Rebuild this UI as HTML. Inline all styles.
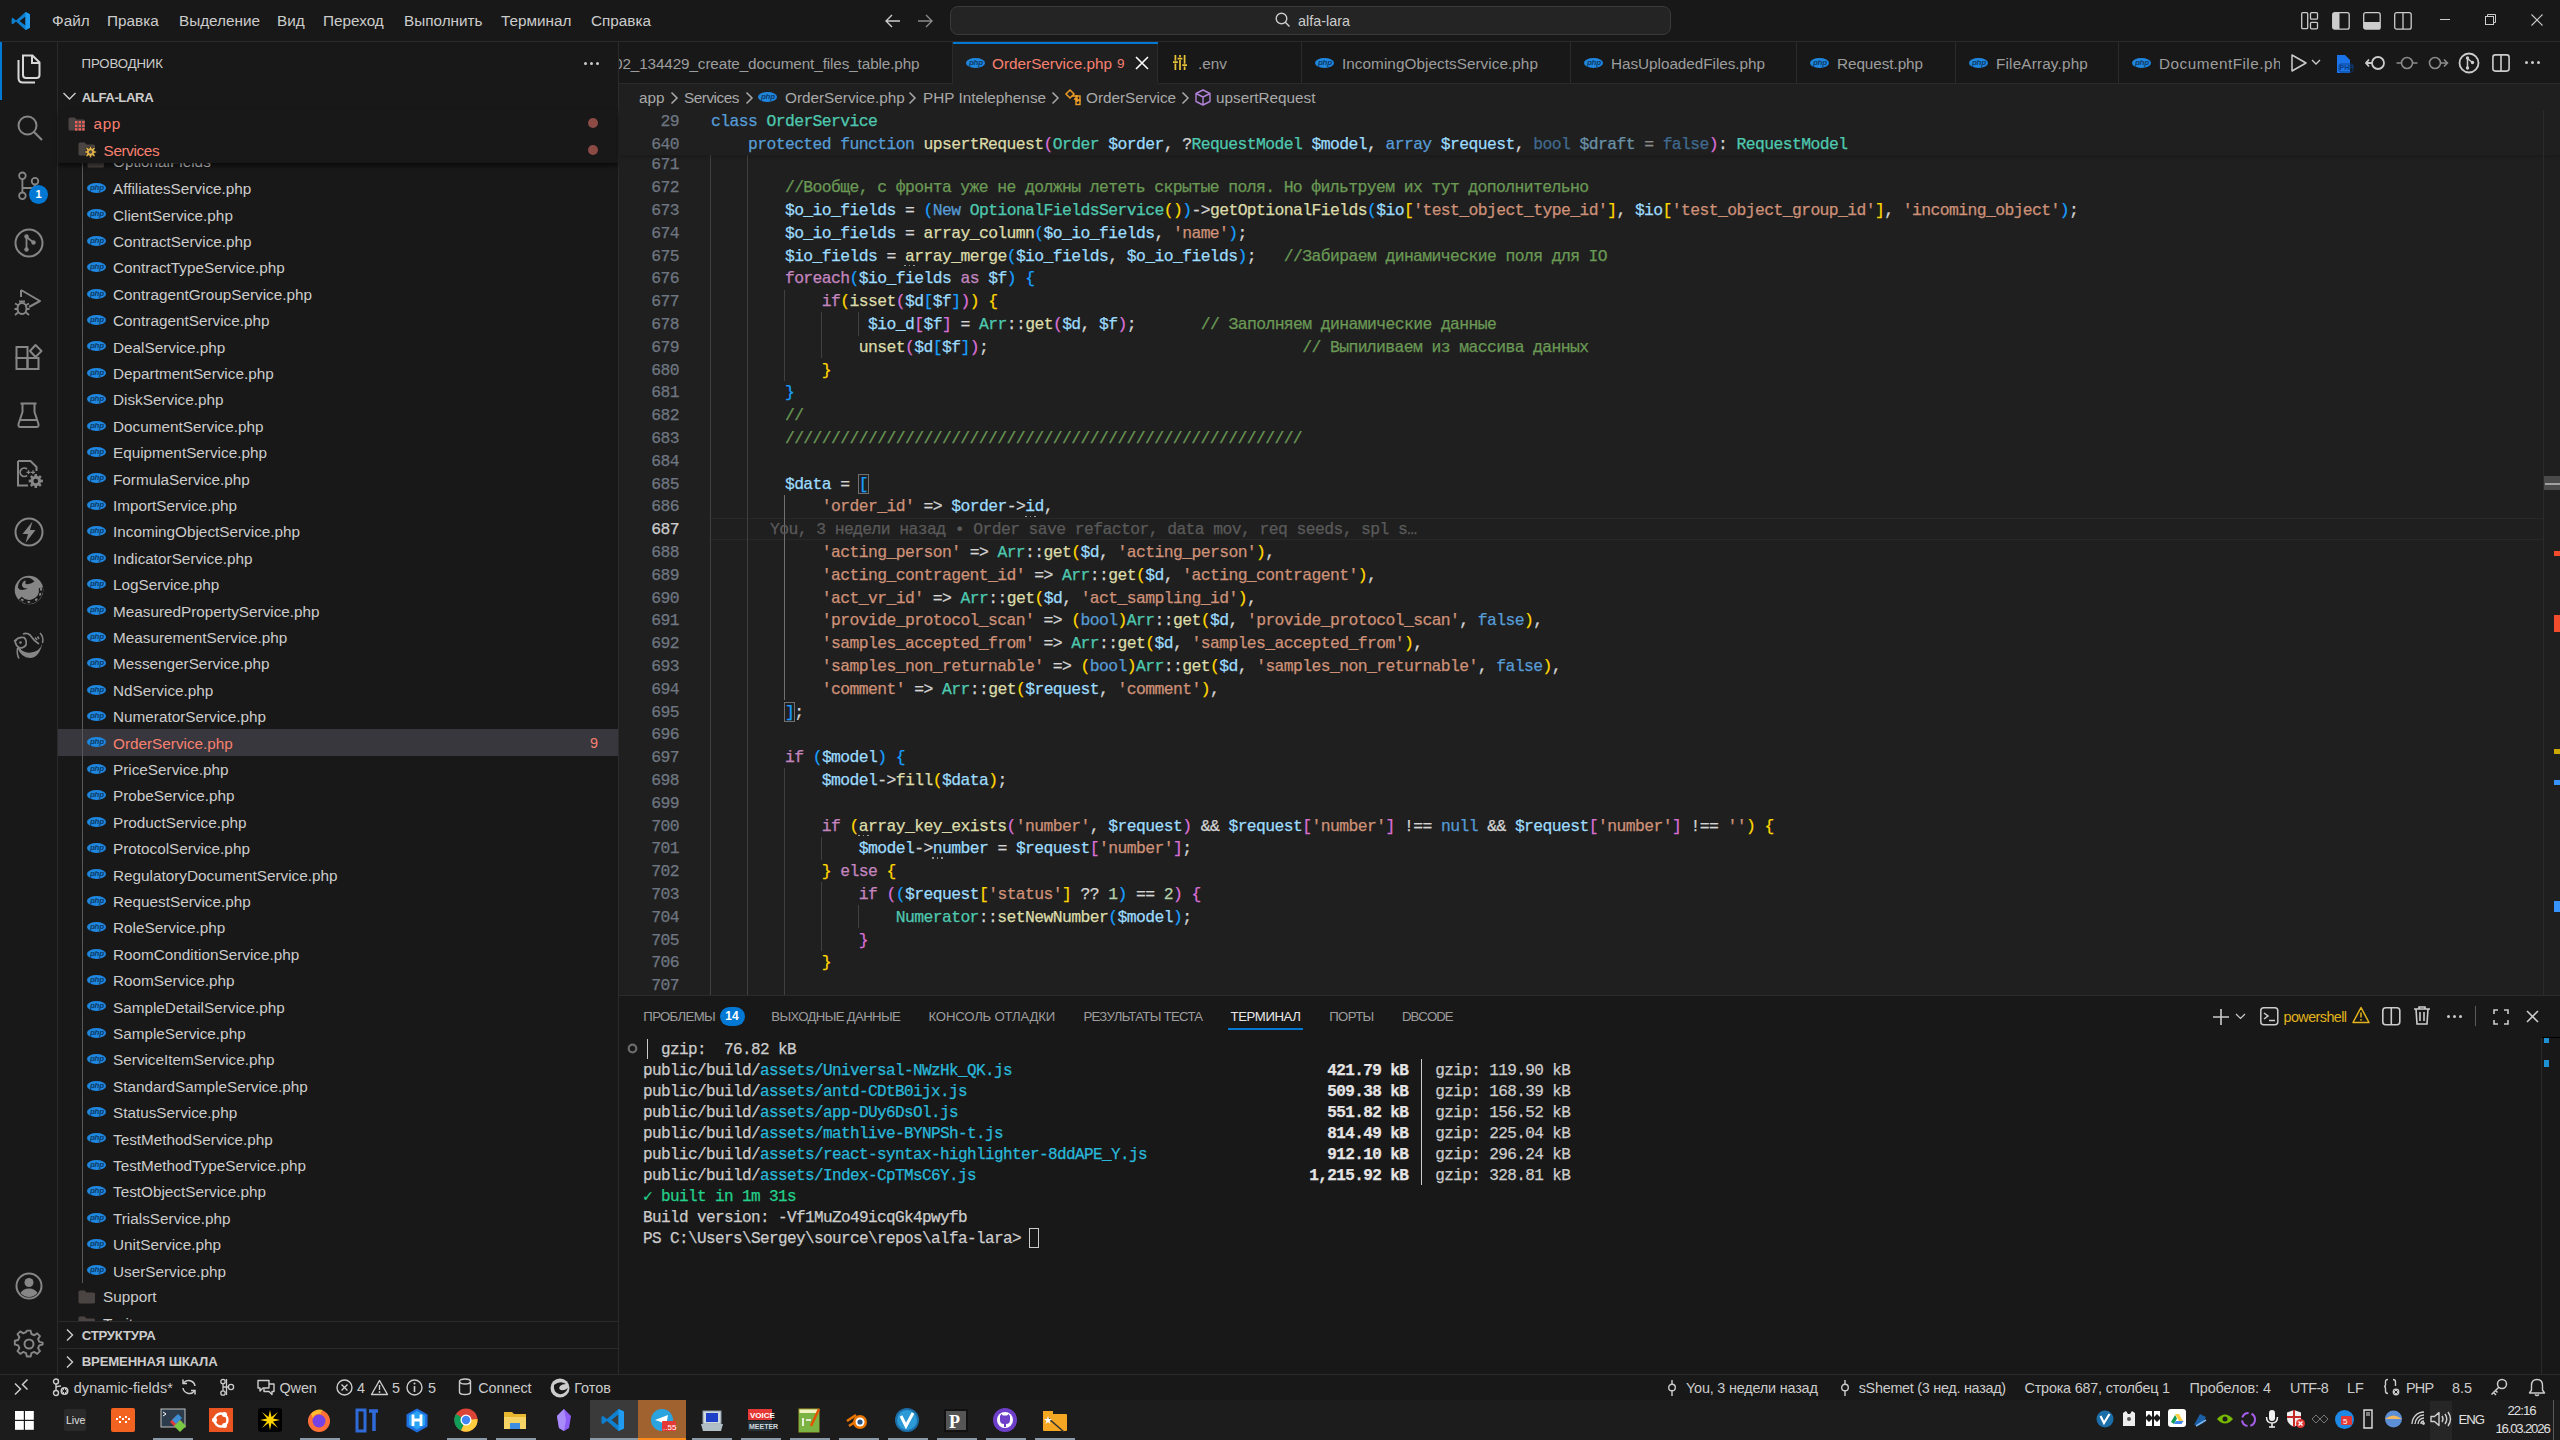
<!DOCTYPE html><html><head><meta charset="utf-8"><style>
*{box-sizing:border-box;margin:0;padding:0}
html,body{width:2560px;height:1440px;overflow:hidden;background:#181818}
body{position:relative;font-family:"Liberation Sans",sans-serif;color:#cccccc}
.a{position:absolute}
.t{position:absolute;white-space:pre;line-height:1}
.mono{font-family:"Liberation Mono",monospace;-webkit-text-stroke:0.25px currentColor}
svg{position:absolute;overflow:visible}
.php{position:absolute;width:19px;height:10px;border-radius:50%;background:#1f87e0}
.php:after{content:"php";position:absolute;left:3px;top:0px;font:italic bold 8px "Liberation Sans",sans-serif;color:#0d3b66;line-height:9px;letter-spacing:-0.3px}
</style></head><body><div class="a" style="left:0px;top:0px;width:2560px;height:41px;background:#181818;"></div>
<div class="a" style="left:0px;top:41px;width:2560px;height:1px;background:#2b2b2b;"></div>
<svg style="left:11px;top:11px;" width="20" height="20" viewBox="0 0 20 20"><path d="M14.5 1 L19 3.2 V16.8 L14.5 19 L5 10.6 L1.8 13.2 L0.6 12.5 V7.5 L1.8 6.8 L5 9.4 Z" fill="#0f7fd0"/><path d="M14.5 5.5 V14.5 L8.6 10 Z" fill="#181818"/><path d="M14.5 1 L19 3.2 V16.8 L14.5 19 Z" fill="#1f9cf0"/></svg>
<div class="t" style="left:52px;top:12.85px;font-size:15.3px;height:15.3px;line-height:15.3px;color:#cccccc;font-weight:normal;font-family:'Liberation Sans', sans-serif;">Файл</div>
<div class="t" style="left:107px;top:12.85px;font-size:15.3px;height:15.3px;line-height:15.3px;color:#cccccc;font-weight:normal;font-family:'Liberation Sans', sans-serif;">Правка</div>
<div class="t" style="left:179px;top:12.85px;font-size:15.3px;height:15.3px;line-height:15.3px;color:#cccccc;font-weight:normal;font-family:'Liberation Sans', sans-serif;">Выделение</div>
<div class="t" style="left:277px;top:12.85px;font-size:15.3px;height:15.3px;line-height:15.3px;color:#cccccc;font-weight:normal;font-family:'Liberation Sans', sans-serif;">Вид</div>
<div class="t" style="left:323px;top:12.85px;font-size:15.3px;height:15.3px;line-height:15.3px;color:#cccccc;font-weight:normal;font-family:'Liberation Sans', sans-serif;">Переход</div>
<div class="t" style="left:404px;top:12.85px;font-size:15.3px;height:15.3px;line-height:15.3px;color:#cccccc;font-weight:normal;font-family:'Liberation Sans', sans-serif;">Выполнить</div>
<div class="t" style="left:501px;top:12.85px;font-size:15.3px;height:15.3px;line-height:15.3px;color:#cccccc;font-weight:normal;font-family:'Liberation Sans', sans-serif;">Терминал</div>
<div class="t" style="left:591px;top:12.85px;font-size:15.3px;height:15.3px;line-height:15.3px;color:#cccccc;font-weight:normal;font-family:'Liberation Sans', sans-serif;">Справка</div>
<svg style="left:884px;top:13px;" width="18" height="16" viewBox="0 0 18 16"><path d="M2 8 H16 M8 2 L2 8 L8 14" stroke="#cccccc" stroke-width="1.4" fill="none"/></svg>
<svg style="left:916px;top:13px;" width="18" height="16" viewBox="0 0 18 16"><path d="M16 8 H2 M10 2 L16 8 L10 14" stroke="#8a8a8a" stroke-width="1.4" fill="none"/></svg>
<div class="a" style="left:950px;top:6px;width:721px;height:29px;background:#242424;border:1px solid #3a3a3a;border-radius:8px"></div>
<svg style="left:1275px;top:12px;" width="16" height="16" viewBox="0 0 16 16"><circle cx="6.5" cy="6.5" r="5.3" stroke="#cccccc" stroke-width="1.4" fill="none"/><path d="M10.3 10.3 L14.5 14.5" stroke="#cccccc" stroke-width="1.5"/></svg>
<div class="t" style="left:1298px;top:13.80px;font-size:14.4px;height:14.4px;line-height:14.4px;color:#cccccc;font-weight:normal;font-family:'Liberation Sans', sans-serif;">alfa-lara</div>
<svg style="left:2301px;top:12px;" width="18" height="18" viewBox="0 0 18 18"><rect x="0.7" y="0.7" width="6" height="16" rx="1" stroke="#cccccc" stroke-width="1.3" fill="none"/><rect x="9.5" y="0.7" width="7" height="6.5" rx="1" stroke="#cccccc" stroke-width="1.3" fill="none"/><rect x="9.5" y="10.3" width="7" height="6.5" rx="1" stroke="#cccccc" stroke-width="1.3" fill="none"/></svg>
<svg style="left:2332px;top:12px;" width="18" height="18" viewBox="0 0 18 18"><rect x="0.7" y="0.7" width="16.5" height="16.5" rx="2" stroke="#cccccc" stroke-width="1.3" fill="none"/><rect x="1" y="1" width="6.5" height="16" fill="#cccccc"/></svg>
<svg style="left:2363px;top:12px;" width="18" height="18" viewBox="0 0 18 18"><rect x="0.7" y="0.7" width="16.5" height="16.5" rx="2" stroke="#cccccc" stroke-width="1.3" fill="none"/><rect x="1" y="10" width="16" height="7" fill="#cccccc"/></svg>
<svg style="left:2394px;top:12px;" width="18" height="18" viewBox="0 0 18 18"><rect x="0.7" y="0.7" width="16.5" height="16.5" rx="2" stroke="#cccccc" stroke-width="1.3" fill="none"/><path d="M9 1 V17" stroke="#cccccc" stroke-width="1.3"/></svg>
<div class="a" style="left:2440px;top:19px;width:10px;height:1px;background:#cccccc;"></div>
<svg style="left:2485px;top:14px;" width="12" height="12" viewBox="0 0 12 12"><rect x="0.5" y="2.5" width="8" height="8" stroke="#cccccc" fill="none"/><path d="M2.5 2.5 V0.5 H10.5 V8.5 H8.5" stroke="#cccccc" fill="none"/></svg>
<svg style="left:2531px;top:14px;" width="12" height="12" viewBox="0 0 12 12"><path d="M0.5 0.5 L11.5 11.5 M11.5 0.5 L0.5 11.5" stroke="#cccccc" stroke-width="1.1"/></svg>
<div class="a" style="left:0px;top:42px;width:57px;height:1332px;background:#181818;"></div>
<div class="a" style="left:57px;top:42px;width:1px;height:1332px;background:#2b2b2b;"></div>
<div class="a" style="left:0px;top:42px;width:2px;height:58px;background:#0078d4;"></div>
<svg style="left:15px;top:54px;" width="28" height="32" viewBox="0 0 28 32"><path d="M8 1.5 H17.5 L24.5 8.5 V21 Q24.5 24 21.5 24 H11 Q8 24 8 21 Z" stroke="#d7d7d7" stroke-width="2" fill="none"/><path d="M17 1.5 V9 H24.5" stroke="#d7d7d7" stroke-width="2" fill="none"/><path d="M3.5 6 V24 Q3.5 28.5 8 28.5 H20" stroke="#d7d7d7" stroke-width="2" fill="none"/></svg>
<svg style="left:16px;top:114px;" width="28" height="28" viewBox="0 0 28 28"><circle cx="11.5" cy="11.5" r="9" stroke="#868686" stroke-width="2" fill="none"/><path d="M18 18 L26 26" stroke="#868686" stroke-width="2.2"/></svg>
<svg style="left:14px;top:168px;" width="30" height="34" viewBox="0 0 30 34"><circle cx="8.4" cy="7.8" r="3.3" stroke="#868686" stroke-width="1.8" fill="none"/><circle cx="8.4" cy="27.8" r="3.3" stroke="#868686" stroke-width="1.8" fill="none"/><circle cx="21" cy="13.2" r="3.3" stroke="#868686" stroke-width="1.8" fill="none"/><path d="M8.4 11.1 V24.5 M21 16.5 Q21 20 17 20 H8.4" stroke="#868686" stroke-width="1.8" fill="none"/></svg>
<div class="a" style="left:29px;top:185px;width:19px;height:19px;border-radius:50%;background:#0078d4;color:#fff;font:bold 11px Liberation Sans,sans-serif;line-height:19px;text-align:center">1</div>
<svg style="left:14px;top:228px;" width="30" height="30" viewBox="0 0 30 30"><circle cx="15" cy="15" r="13.5" stroke="#868686" stroke-width="2" fill="none"/><circle cx="12.5" cy="8.5" r="2.2" fill="#868686"/><circle cx="12.5" cy="21.5" r="2.2" fill="#868686"/><circle cx="19.5" cy="14.5" r="2.2" fill="#868686"/><path d="M12.5 8.5 V21.5 M12.5 9 L19.5 14.5" stroke="#868686" stroke-width="1.8"/></svg>
<svg style="left:13px;top:287px;" width="30" height="30" viewBox="0 0 30 30"><path d="M8 3 L27 14 L16 20" stroke="#868686" stroke-width="2" fill="none" stroke-linejoin="round"/><path d="M8 3 V10" stroke="#868686" stroke-width="2"/><ellipse cx="9" cy="21.5" rx="4.5" ry="5.5" stroke="#868686" stroke-width="2" fill="none"/><path d="M2 16.5 L5 18 M1.5 22 H4.5 M2 28 L5 25.5 M16 16.5 L13 18 M16.5 22 H13.5 M16 28 L13 25.5 M6 14.5 L12 14.5" stroke="#868686" stroke-width="1.8"/></svg>
<svg style="left:14px;top:342px;" width="32" height="32" viewBox="0 0 32 32"><rect x="2.5" y="5" width="11" height="11" stroke="#868686" stroke-width="2" fill="none"/><rect x="2.5" y="16" width="11" height="11" stroke="#868686" stroke-width="2" fill="none"/><rect x="13.5" y="16" width="11" height="11" stroke="#868686" stroke-width="2" fill="none"/><path d="M16 9 L21.5 3 L27.5 9 L21.5 15 Z" stroke="#868686" stroke-width="2" fill="none" stroke-linejoin="round"/></svg>
<svg style="left:17px;top:402px;" width="26" height="28" viewBox="0 0 26 28"><path d="M3.5 1.5 H19.5 M5.5 1.5 V10 L1.5 22 Q1 25 3.5 25 H19.5 Q22 25 21.5 22 L17.5 10 V1.5" stroke="#868686" stroke-width="2" fill="none" stroke-linejoin="round"/><path d="M3 18 H20" stroke="#868686" stroke-width="2"/></svg>
<svg style="left:17px;top:460px;" width="30" height="30" viewBox="0 0 30 30"><path d="M1 1 H13.5 L19.5 7 V11 M1 1 V25.5 H11" stroke="#868686" stroke-width="2" fill="none"/><path d="M10 9 A4.2 4.2 0 1 0 10 15.5" stroke="#868686" stroke-width="1.8" fill="none"/><path d="M9.5 12.3 H13.5 M11.5 10.3 V14.3 M14 12.3 H18 M16 10.3 V14.3" stroke="#868686" stroke-width="1.3"/><rect x="11" y="14.6" width="19" height="15.4" fill="#181818"/><path d="M23.80 19.58 L25.90 19.83 L25.90 22.17 L23.80 22.42 L23.34 23.53 L24.65 25.20 L23.00 26.85 L21.33 25.54 L20.22 26.00 L19.97 28.10 L17.63 28.10 L17.38 26.00 L16.27 25.54 L14.60 26.85 L12.95 25.20 L14.26 23.53 L13.80 22.42 L11.70 22.17 L11.70 19.83 L13.80 19.58 L14.26 18.47 L12.95 16.80 L14.60 15.15 L16.27 16.46 L17.38 16.00 L17.63 13.90 L19.97 13.90 L20.22 16.00 L21.33 16.46 L23.00 15.15 L24.65 16.80 L23.34 18.47 Z" fill="#868686"/><circle cx="18.8" cy="21" r="2.3" fill="#181818"/></svg>
<svg style="left:14px;top:517px;" width="30" height="30" viewBox="0 0 30 30"><circle cx="15" cy="15" r="13.5" stroke="#868686" stroke-width="2" fill="none"/><path d="M18.5 4.5 L8.5 17 H14 L11.5 26 L21.5 13 H16 Z" fill="#868686"/></svg>
<svg style="left:14px;top:575px;" width="30" height="30" viewBox="0 0 30 30"><circle cx="15" cy="15" r="14.3" fill="#868686"/><path d="M3.9 12.5 Q4.5 4 12 2.8 Q17 2 20.5 6.5 Q16 9.8 11.5 9 L11.5 5.2 Q7.5 7 8 11 Q9.5 14 14 13.5 Q9 15.8 5.5 14.5 Z" fill="#181818"/><path d="M26.82 12.92 A12 12 0 0 1 6.22 23.18" stroke="#181818" stroke-width="4.2" fill="none"/><ellipse cx="8.29" cy="24.95" rx="1.5" ry="1.1" transform="rotate(214 8.29 24.95)" fill="#868686"/><ellipse cx="14.79" cy="27.00" rx="1.5" ry="1.1" transform="rotate(181 14.79 27.00)" fill="#868686"/><ellipse cx="22.22" cy="24.58" rx="1.5" ry="1.1" transform="rotate(143 22.22 24.58)" fill="#868686"/><ellipse cx="26.20" cy="19.30" rx="1.5" ry="1.1" transform="rotate(111 26.20 19.30)" fill="#868686"/><ellipse cx="26.98" cy="14.27" rx="1.5" ry="1.1" transform="rotate(86 26.98 14.27)" fill="#868686"/></svg>
<svg style="left:13px;top:631px;" width="32" height="32" viewBox="0 0 32 32"><path d="M2 9.5 Q6 5.5 11 6.5 Q14 9 13 14 Q11 17 7 17 Q3 16 2 9.5 Z" stroke="#868686" stroke-width="1.7" fill="none"/><circle cx="7.5" cy="11.5" r="1.3" fill="#868686"/><path d="M1 10 L4 9 M10 3 Q14 1.5 17 4 Q21 10 26 13" stroke="#868686" stroke-width="1.7" fill="none"/><path d="M4.5 17 Q8 26.5 17 27 Q26.5 26.5 29.5 12 Q27 20.5 18 21.5 Q10 22.5 6.5 16.5 Z" fill="#868686"/><path d="M27 2 Q31 6 29.5 12 M22 6.5 L24 9 M24.5 5.5 L26 8" stroke="#868686" stroke-width="1.5" fill="none"/><path d="M4.5 17 Q3.5 23 6 27.5" stroke="#868686" stroke-width="1.5" fill="none"/></svg>
<svg style="left:15px;top:1272px;" width="28" height="28" viewBox="0 0 28 28"><circle cx="14" cy="14" r="12.5" stroke="#868686" stroke-width="2" fill="none"/><circle cx="14" cy="10.5" r="4.5" fill="#868686"/><path d="M5.5 21 Q8 16.5 14 16.5 Q20 16.5 22.5 21 Q19 25 14 25 Q9 25 5.5 21Z" fill="#868686"/></svg>
<svg style="left:15px;top:1330px;" width="28" height="28" viewBox="0 0 28 28"><circle cx="14" cy="14" r="4.5" stroke="#868686" stroke-width="2" fill="none"/><path d="M12 1.5 H16 L16.8 5 L19.8 6.3 L22.8 4.3 L25.7 7.2 L23.7 10.2 L25 13.2 L28.5 14 V16 L25 16.8 L23.7 19.8 L25.7 22.8 L22.8 25.7 L19.8 23.7 L16.8 25 L16 28.5 H12 L11.2 25 L8.2 23.7 L5.2 25.7 L2.3 22.8 L4.3 19.8 L3 16.8 L-0.5 16 V12 L3 11.2 L4.3 8.2 L2.3 5.2 L5.2 2.3 L8.2 4.3 L11.2 3 Z" transform="translate(0.3,-0.8) scale(0.96)" stroke="#868686" stroke-width="2" fill="none" stroke-linejoin="round"/></svg>
<div class="a" style="left:58px;top:42px;width:560px;height:1332px;background:#181818;"></div>
<div class="a" style="left:618px;top:42px;width:1px;height:1332px;background:#2b2b2b;"></div>
<div class="t" style="left:81.6px;top:57.40px;font-size:13.2px;height:13.2px;line-height:13.2px;color:#cccccc;font-weight:normal;font-family:'Liberation Sans', sans-serif;letter-spacing:-0.107px;">ПРОВОДНИК</div>
<div class="a" style="left:584px;top:62px;width:3px;height:3px;background:#cccccc;border-radius:50%"></div>
<div class="a" style="left:590px;top:62px;width:3px;height:3px;background:#cccccc;border-radius:50%"></div>
<div class="a" style="left:596px;top:62px;width:3px;height:3px;background:#cccccc;border-radius:50%"></div>
<svg style="left:62px;top:91px;" width="15" height="11" viewBox="0 0 15 11"><path d="M1.5 2 L7.5 8 L13.5 2" stroke="#cccccc" stroke-width="1.4" fill="none"/></svg>
<div class="t" style="left:81.7px;top:90.90px;font-size:13.2px;height:13.2px;line-height:13.2px;color:#cccccc;font-weight:bold;font-family:'Liberation Sans', sans-serif;letter-spacing:-0.435px;">ALFA-LARA</div>
<svg style="left:87px;top:154.4px;" width="18" height="14" viewBox="0 0 18 14"><path d="M0.5 2 Q0.5 0.5 2 0.5 H6.5 L8.5 2.5 H15.5 Q17 2.5 17 4 V12 Q17 13.5 15.5 13.5 H2 Q0.5 13.5 0.5 12 Z" fill="#4a4542"/></svg>
<div class="t" style="left:113px;top:153.95px;font-size:15.3px;height:15.3px;line-height:15.3px;color:#cccccc;font-weight:normal;font-family:'Liberation Sans', sans-serif;">OptionalFields</div>
<div class="t" style="left:113px;top:181.15px;font-size:15.3px;height:15.3px;line-height:15.3px;color:#cccccc;font-weight:normal;font-family:'Liberation Sans', sans-serif;">AffiliatesService.php</div>
<div class="php" style="left:87px;top:183.0px"></div>
<div class="t" style="left:113px;top:207.55px;font-size:15.3px;height:15.3px;line-height:15.3px;color:#cccccc;font-weight:normal;font-family:'Liberation Sans', sans-serif;">ClientService.php</div>
<div class="php" style="left:87px;top:209.4px"></div>
<div class="t" style="left:113px;top:233.95px;font-size:15.3px;height:15.3px;line-height:15.3px;color:#cccccc;font-weight:normal;font-family:'Liberation Sans', sans-serif;">ContractService.php</div>
<div class="php" style="left:87px;top:235.8px"></div>
<div class="t" style="left:113px;top:260.35px;font-size:15.3px;height:15.3px;line-height:15.3px;color:#cccccc;font-weight:normal;font-family:'Liberation Sans', sans-serif;">ContractTypeService.php</div>
<div class="php" style="left:87px;top:262.2px"></div>
<div class="t" style="left:113px;top:286.75px;font-size:15.3px;height:15.3px;line-height:15.3px;color:#cccccc;font-weight:normal;font-family:'Liberation Sans', sans-serif;">ContragentGroupService.php</div>
<div class="php" style="left:87px;top:288.59999999999997px"></div>
<div class="t" style="left:113px;top:313.15px;font-size:15.3px;height:15.3px;line-height:15.3px;color:#cccccc;font-weight:normal;font-family:'Liberation Sans', sans-serif;">ContragentService.php</div>
<div class="php" style="left:87px;top:315.0px"></div>
<div class="t" style="left:113px;top:339.55px;font-size:15.3px;height:15.3px;line-height:15.3px;color:#cccccc;font-weight:normal;font-family:'Liberation Sans', sans-serif;">DealService.php</div>
<div class="php" style="left:87px;top:341.4px"></div>
<div class="t" style="left:113px;top:365.95px;font-size:15.3px;height:15.3px;line-height:15.3px;color:#cccccc;font-weight:normal;font-family:'Liberation Sans', sans-serif;">DepartmentService.php</div>
<div class="php" style="left:87px;top:367.8px"></div>
<div class="t" style="left:113px;top:392.35px;font-size:15.3px;height:15.3px;line-height:15.3px;color:#cccccc;font-weight:normal;font-family:'Liberation Sans', sans-serif;">DiskService.php</div>
<div class="php" style="left:87px;top:394.2px"></div>
<div class="t" style="left:113px;top:418.75px;font-size:15.3px;height:15.3px;line-height:15.3px;color:#cccccc;font-weight:normal;font-family:'Liberation Sans', sans-serif;">DocumentService.php</div>
<div class="php" style="left:87px;top:420.59999999999997px"></div>
<div class="t" style="left:113px;top:445.15px;font-size:15.3px;height:15.3px;line-height:15.3px;color:#cccccc;font-weight:normal;font-family:'Liberation Sans', sans-serif;">EquipmentService.php</div>
<div class="php" style="left:87px;top:447.0px"></div>
<div class="t" style="left:113px;top:471.55px;font-size:15.3px;height:15.3px;line-height:15.3px;color:#cccccc;font-weight:normal;font-family:'Liberation Sans', sans-serif;">FormulaService.php</div>
<div class="php" style="left:87px;top:473.4px"></div>
<div class="t" style="left:113px;top:497.95px;font-size:15.3px;height:15.3px;line-height:15.3px;color:#cccccc;font-weight:normal;font-family:'Liberation Sans', sans-serif;">ImportService.php</div>
<div class="php" style="left:87px;top:499.79999999999995px"></div>
<div class="t" style="left:113px;top:524.35px;font-size:15.3px;height:15.3px;line-height:15.3px;color:#cccccc;font-weight:normal;font-family:'Liberation Sans', sans-serif;">IncomingObjectService.php</div>
<div class="php" style="left:87px;top:526.2px"></div>
<div class="t" style="left:113px;top:550.75px;font-size:15.3px;height:15.3px;line-height:15.3px;color:#cccccc;font-weight:normal;font-family:'Liberation Sans', sans-serif;">IndicatorService.php</div>
<div class="php" style="left:87px;top:552.6px"></div>
<div class="t" style="left:113px;top:577.15px;font-size:15.3px;height:15.3px;line-height:15.3px;color:#cccccc;font-weight:normal;font-family:'Liberation Sans', sans-serif;">LogService.php</div>
<div class="php" style="left:87px;top:579.0px"></div>
<div class="t" style="left:113px;top:603.55px;font-size:15.3px;height:15.3px;line-height:15.3px;color:#cccccc;font-weight:normal;font-family:'Liberation Sans', sans-serif;">MeasuredPropertyService.php</div>
<div class="php" style="left:87px;top:605.4000000000001px"></div>
<div class="t" style="left:113px;top:629.95px;font-size:15.3px;height:15.3px;line-height:15.3px;color:#cccccc;font-weight:normal;font-family:'Liberation Sans', sans-serif;">MeasurementService.php</div>
<div class="php" style="left:87px;top:631.8px"></div>
<div class="t" style="left:113px;top:656.35px;font-size:15.3px;height:15.3px;line-height:15.3px;color:#cccccc;font-weight:normal;font-family:'Liberation Sans', sans-serif;">MessengerService.php</div>
<div class="php" style="left:87px;top:658.2px"></div>
<div class="t" style="left:113px;top:682.75px;font-size:15.3px;height:15.3px;line-height:15.3px;color:#cccccc;font-weight:normal;font-family:'Liberation Sans', sans-serif;">NdService.php</div>
<div class="php" style="left:87px;top:684.6px"></div>
<div class="t" style="left:113px;top:709.15px;font-size:15.3px;height:15.3px;line-height:15.3px;color:#cccccc;font-weight:normal;font-family:'Liberation Sans', sans-serif;">NumeratorService.php</div>
<div class="php" style="left:87px;top:711.0px"></div>
<div class="a" style="left:58px;top:729.2px;width:560px;height:26.4px;background:#37373d;"></div>
<div class="t" style="left:113px;top:735.55px;font-size:15.3px;height:15.3px;line-height:15.3px;color:#f88070;font-weight:normal;font-family:'Liberation Sans', sans-serif;">OrderService.php</div>
<div class="t" style="left:590px;top:736.00px;font-size:14.4px;height:14.4px;line-height:14.4px;color:#f88070;font-weight:normal;font-family:'Liberation Sans', sans-serif;">9</div>
<div class="php" style="left:87px;top:737.4000000000001px"></div>
<div class="t" style="left:113px;top:761.95px;font-size:15.3px;height:15.3px;line-height:15.3px;color:#cccccc;font-weight:normal;font-family:'Liberation Sans', sans-serif;">PriceService.php</div>
<div class="php" style="left:87px;top:763.8px"></div>
<div class="t" style="left:113px;top:788.35px;font-size:15.3px;height:15.3px;line-height:15.3px;color:#cccccc;font-weight:normal;font-family:'Liberation Sans', sans-serif;">ProbeService.php</div>
<div class="php" style="left:87px;top:790.2px"></div>
<div class="t" style="left:113px;top:814.75px;font-size:15.3px;height:15.3px;line-height:15.3px;color:#cccccc;font-weight:normal;font-family:'Liberation Sans', sans-serif;">ProductService.php</div>
<div class="php" style="left:87px;top:816.5999999999999px"></div>
<div class="t" style="left:113px;top:841.15px;font-size:15.3px;height:15.3px;line-height:15.3px;color:#cccccc;font-weight:normal;font-family:'Liberation Sans', sans-serif;">ProtocolService.php</div>
<div class="php" style="left:87px;top:843.0px"></div>
<div class="t" style="left:113px;top:867.55px;font-size:15.3px;height:15.3px;line-height:15.3px;color:#cccccc;font-weight:normal;font-family:'Liberation Sans', sans-serif;">RegulatoryDocumentService.php</div>
<div class="php" style="left:87px;top:869.4000000000001px"></div>
<div class="t" style="left:113px;top:893.95px;font-size:15.3px;height:15.3px;line-height:15.3px;color:#cccccc;font-weight:normal;font-family:'Liberation Sans', sans-serif;">RequestService.php</div>
<div class="php" style="left:87px;top:895.8px"></div>
<div class="t" style="left:113px;top:920.35px;font-size:15.3px;height:15.3px;line-height:15.3px;color:#cccccc;font-weight:normal;font-family:'Liberation Sans', sans-serif;">RoleService.php</div>
<div class="php" style="left:87px;top:922.2px"></div>
<div class="t" style="left:113px;top:946.75px;font-size:15.3px;height:15.3px;line-height:15.3px;color:#cccccc;font-weight:normal;font-family:'Liberation Sans', sans-serif;">RoomConditionService.php</div>
<div class="php" style="left:87px;top:948.5999999999999px"></div>
<div class="t" style="left:113px;top:973.15px;font-size:15.3px;height:15.3px;line-height:15.3px;color:#cccccc;font-weight:normal;font-family:'Liberation Sans', sans-serif;">RoomService.php</div>
<div class="php" style="left:87px;top:975.0px"></div>
<div class="t" style="left:113px;top:999.55px;font-size:15.3px;height:15.3px;line-height:15.3px;color:#cccccc;font-weight:normal;font-family:'Liberation Sans', sans-serif;">SampleDetailService.php</div>
<div class="php" style="left:87px;top:1001.4000000000001px"></div>
<div class="t" style="left:113px;top:1025.95px;font-size:15.3px;height:15.3px;line-height:15.3px;color:#cccccc;font-weight:normal;font-family:'Liberation Sans', sans-serif;">SampleService.php</div>
<div class="php" style="left:87px;top:1027.8px"></div>
<div class="t" style="left:113px;top:1052.35px;font-size:15.3px;height:15.3px;line-height:15.3px;color:#cccccc;font-weight:normal;font-family:'Liberation Sans', sans-serif;">ServiceItemService.php</div>
<div class="php" style="left:87px;top:1054.2px"></div>
<div class="t" style="left:113px;top:1078.75px;font-size:15.3px;height:15.3px;line-height:15.3px;color:#cccccc;font-weight:normal;font-family:'Liberation Sans', sans-serif;">StandardSampleService.php</div>
<div class="php" style="left:87px;top:1080.6px"></div>
<div class="t" style="left:113px;top:1105.15px;font-size:15.3px;height:15.3px;line-height:15.3px;color:#cccccc;font-weight:normal;font-family:'Liberation Sans', sans-serif;">StatusService.php</div>
<div class="php" style="left:87px;top:1107.0px"></div>
<div class="t" style="left:113px;top:1131.55px;font-size:15.3px;height:15.3px;line-height:15.3px;color:#cccccc;font-weight:normal;font-family:'Liberation Sans', sans-serif;">TestMethodService.php</div>
<div class="php" style="left:87px;top:1133.4px"></div>
<div class="t" style="left:113px;top:1157.95px;font-size:15.3px;height:15.3px;line-height:15.3px;color:#cccccc;font-weight:normal;font-family:'Liberation Sans', sans-serif;">TestMethodTypeService.php</div>
<div class="php" style="left:87px;top:1159.8px"></div>
<div class="t" style="left:113px;top:1184.35px;font-size:15.3px;height:15.3px;line-height:15.3px;color:#cccccc;font-weight:normal;font-family:'Liberation Sans', sans-serif;">TestObjectService.php</div>
<div class="php" style="left:87px;top:1186.2px"></div>
<div class="t" style="left:113px;top:1210.75px;font-size:15.3px;height:15.3px;line-height:15.3px;color:#cccccc;font-weight:normal;font-family:'Liberation Sans', sans-serif;">TrialsService.php</div>
<div class="php" style="left:87px;top:1212.6px"></div>
<div class="t" style="left:113px;top:1237.15px;font-size:15.3px;height:15.3px;line-height:15.3px;color:#cccccc;font-weight:normal;font-family:'Liberation Sans', sans-serif;">UnitService.php</div>
<div class="php" style="left:87px;top:1239.0px"></div>
<div class="t" style="left:113px;top:1263.55px;font-size:15.3px;height:15.3px;line-height:15.3px;color:#cccccc;font-weight:normal;font-family:'Liberation Sans', sans-serif;">UserService.php</div>
<div class="php" style="left:87px;top:1265.3999999999999px"></div>
<svg style="left:78px;top:1289.6px;" width="18" height="14" viewBox="0 0 18 14"><path d="M0.5 2 Q0.5 0.5 2 0.5 H6.5 L8.5 2.5 H15.5 Q17 2.5 17 4 V12 Q17 13.5 15.5 13.5 H2 Q0.5 13.5 0.5 12 Z" fill="#4a4542"/></svg>
<div class="t" style="left:103px;top:1289.15px;font-size:15.3px;height:15.3px;line-height:15.3px;color:#cccccc;font-weight:normal;font-family:'Liberation Sans', sans-serif;">Support</div>
<svg style="left:78px;top:1316.0px;" width="18" height="14" viewBox="0 0 18 14"><path d="M0.5 2 Q0.5 0.5 2 0.5 H6.5 L8.5 2.5 H15.5 Q17 2.5 17 4 V12 Q17 13.5 15.5 13.5 H2 Q0.5 13.5 0.5 12 Z" fill="#4a4542"/></svg>
<div class="t" style="left:103px;top:1315.55px;font-size:15.3px;height:15.3px;line-height:15.3px;color:#cccccc;font-weight:normal;font-family:'Liberation Sans', sans-serif;">Traits</div>
<div class="a" style="left:82px;top:163px;width:1px;height:1120px;background:#585858;"></div>
<div class="a" style="left:58px;top:110px;width:560px;height:53px;background:#181818;box-shadow:0 3px 4px rgba(0,0,0,0.55)"></div>
<svg style="left:68px;top:117px;" width="20" height="14" viewBox="0 0 20 14"><path d="M0.5 2 Q0.5 0.5 2 0.5 H6.5 L8.5 2.5 H15.5 Q17 2.5 17 4 V12 Q17 13.5 15.5 13.5 H2 Q0.5 13.5 0.5 12 Z" fill="#4a4542"/><g fill="#f0605a"><rect x="7" y="4" width="2.4" height="2.4"/><rect x="10.6" y="4" width="2.4" height="2.4"/><rect x="14.2" y="4" width="2.4" height="2.4"/><rect x="7" y="7.6" width="2.4" height="2.4"/><rect x="10.6" y="7.6" width="2.4" height="2.4"/><rect x="14.2" y="7.6" width="2.4" height="2.4"/><rect x="7" y="11.2" width="2.4" height="2.4"/><rect x="10.6" y="11.2" width="2.4" height="2.4"/><rect x="14.2" y="11.2" width="2.4" height="2.4"/></g></svg>
<div class="t" style="left:93.6px;top:116.35px;font-size:15.3px;height:15.3px;line-height:15.3px;color:#f88070;font-weight:normal;font-family:'Liberation Sans', sans-serif;letter-spacing:0.625px;">app</div>
<div class="a" style="left:588px;top:118px;width:10px;height:10px;background:#8c4a44;border-radius:50%"></div>
<svg style="left:78px;top:142px;" width="20" height="17" viewBox="0 0 20 17"><path d="M0.5 2 Q0.5 0.5 2 0.5 H6.5 L8.5 2.5 H15.5 Q17 2.5 17 4 V12 Q17 13.5 15.5 13.5 H2 Q0.5 13.5 0.5 12 Z" fill="#4a4542"/><path d="M16.35 8.91 L18.22 9.06 L18.22 10.94 L16.35 11.09 L15.99 11.95 L17.21 13.38 L15.88 14.71 L14.45 13.49 L13.59 13.85 L13.44 15.72 L11.56 15.72 L11.41 13.85 L10.55 13.49 L9.12 14.71 L7.79 13.38 L9.01 11.95 L8.65 11.09 L6.78 10.94 L6.78 9.06 L8.65 8.91 L9.01 8.05 L7.79 6.62 L9.12 5.29 L10.55 6.51 L11.41 6.15 L11.56 4.28 L13.44 4.28 L13.59 6.15 L14.45 6.51 L15.88 5.29 L17.21 6.62 L15.99 8.05 Z" fill="#e2b34a" stroke="#181818" stroke-width="0.6"/><circle cx="12.5" cy="10" r="1.8" fill="#4a4542"/></svg>
<div class="t" style="left:103.6px;top:142.75px;font-size:15.3px;height:15.3px;line-height:15.3px;color:#f88070;font-weight:normal;font-family:'Liberation Sans', sans-serif;letter-spacing:-0.371px;">Services</div>
<div class="a" style="left:588px;top:145px;width:10px;height:10px;background:#8c4a44;border-radius:50%"></div>
<div class="a" style="left:58px;top:1321px;width:560px;height:53px;background:#181818;"></div>
<div class="a" style="left:58px;top:1321px;width:560px;height:1px;background:#2b2b2b;"></div>
<div class="a" style="left:58px;top:1348px;width:560px;height:1px;background:#2b2b2b;"></div>
<svg style="left:65px;top:1328px;" width="10" height="14" viewBox="0 0 10 14"><path d="M2 1.5 L7.5 7 L2 12.5" stroke="#cccccc" stroke-width="1.4" fill="none"/></svg>
<div class="t" style="left:81.7px;top:1328.80px;font-size:13.2px;height:13.2px;line-height:13.2px;color:#cccccc;font-weight:bold;font-family:'Liberation Sans', sans-serif;letter-spacing:-0.238px;">СТРУКТУРА</div>
<svg style="left:65px;top:1354.5px;" width="10" height="14" viewBox="0 0 10 14"><path d="M2 1.5 L7.5 7 L2 12.5" stroke="#cccccc" stroke-width="1.4" fill="none"/></svg>
<div class="t" style="left:81.7px;top:1354.90px;font-size:13.2px;height:13.2px;line-height:13.2px;color:#cccccc;font-weight:bold;font-family:'Liberation Sans', sans-serif;letter-spacing:-0.167px;">ВРЕМЕННАЯ ШКАЛА</div>
<div class="a" style="left:619px;top:42px;width:1941px;height:42px;background:#181818;"></div>
<div class="a" style="left:619px;top:83px;width:1941px;height:1px;background:#2b2b2b;"></div>
<div class="a" style="left:952px;top:42px;width:1px;height:41px;background:#2b2b2b;"></div>
<div class="a" style="left:619px;top:42px;width:334px;height:41px;overflow:hidden">
<div class="t" style="left:-5px;top:13.85px;font-size:15.3px;height:15.3px;line-height:15.3px;color:#9d9d9d;font-weight:normal;font-family:'Liberation Sans', sans-serif;letter-spacing:-0.121px;">02_134429_create_document_files_table.php</div>
</div>
<div class="a" style="left:953px;top:42px;width:205px;height:42px;background:#1f1f1f;"></div>
<div class="a" style="left:953px;top:42px;width:205px;height:2px;background:#0078d4;"></div>
<div class="a" style="left:1157px;top:44px;width:1px;height:39px;background:#2b2b2b;"></div>
<div class="php" style="left:966px;top:58px"></div>
<div class="t" style="left:992px;top:55.85px;font-size:15.3px;height:15.3px;line-height:15.3px;color:#f88070;font-weight:normal;font-family:'Liberation Sans', sans-serif;letter-spacing:0.006px;">OrderService.php</div>
<div class="t" style="left:1117px;top:56.75px;font-size:13.5px;height:13.5px;line-height:13.5px;color:#f88070;font-weight:normal;font-family:'Liberation Sans', sans-serif;">9</div>
<svg style="left:1135px;top:56px;" width="14" height="14" viewBox="0 0 14 14"><path d="M1 1 L13 13 M13 1 L1 13" stroke="#ffffff" stroke-width="1.6"/></svg>
<div class="a" style="left:1301px;top:42px;width:1px;height:41px;background:#2b2b2b;"></div>
<svg style="left:1173px;top:54px;" width="16" height="19" viewBox="0 0 16 19"><path d="M2.4 1 V6.8 M2.4 9.6 V16 M7 1 V3.3 M7 6.1 V16 M11.6 1 V9.8 M11.6 12.6 V16" stroke="#e8c33a" stroke-width="1.7"/><path d="M0 8.2 H4.8 M4.6 4.7 H9.4 M9.2 11.2 H14" stroke="#e8c33a" stroke-width="1.8"/></svg>
<div class="t" style="left:1198px;top:55.85px;font-size:15.3px;height:15.3px;line-height:15.3px;color:#9d9d9d;font-weight:normal;font-family:'Liberation Sans', sans-serif;">.env</div>
<div class="a" style="left:1570px;top:42px;width:1px;height:41px;background:#2b2b2b;"></div>
<div class="php" style="left:1315px;top:58px"></div>
<div class="t" style="left:1342px;top:55.85px;font-size:15.3px;height:15.3px;line-height:15.3px;color:#9d9d9d;font-weight:normal;font-family:'Liberation Sans', sans-serif;letter-spacing:0.049px;">IncomingObjectsService.php</div>
<div class="a" style="left:1796px;top:42px;width:1px;height:41px;background:#2b2b2b;"></div>
<div class="php" style="left:1584px;top:58px"></div>
<div class="t" style="left:1611px;top:55.85px;font-size:15.3px;height:15.3px;line-height:15.3px;color:#9d9d9d;font-weight:normal;font-family:'Liberation Sans', sans-serif;letter-spacing:-0.039px;">HasUploadedFiles.php</div>
<div class="a" style="left:1955px;top:42px;width:1px;height:41px;background:#2b2b2b;"></div>
<div class="php" style="left:1810px;top:58px"></div>
<div class="t" style="left:1837px;top:55.85px;font-size:15.3px;height:15.3px;line-height:15.3px;color:#9d9d9d;font-weight:normal;font-family:'Liberation Sans', sans-serif;letter-spacing:-0.069px;">Request.php</div>
<div class="a" style="left:2118px;top:42px;width:1px;height:41px;background:#2b2b2b;"></div>
<div class="php" style="left:1969px;top:58px"></div>
<div class="t" style="left:1996px;top:55.85px;font-size:15.3px;height:15.3px;line-height:15.3px;color:#9d9d9d;font-weight:normal;font-family:'Liberation Sans', sans-serif;letter-spacing:0.166px;">FileArray.php</div>
<div class="a" style="left:2289px;top:42px;width:1px;height:41px;background:#2b2b2b;"></div>
<div class="php" style="left:2132px;top:58px"></div>
<div class="t" style="left:2159px;top:55.85px;font-size:15.3px;height:15.3px;line-height:15.3px;color:#9d9d9d;font-weight:normal;font-family:'Liberation Sans', sans-serif;letter-spacing:0.490px;">DocumentFile.php</div>
<div class="a" style="left:2280px;top:42px;width:280px;height:41px;background:#181818;"></div>
<svg style="left:2290px;top:54px;" width="18" height="18" viewBox="0 0 18 18"><path d="M2 1 L16 9 L2 17 Z" stroke="#cccccc" stroke-width="1.5" fill="none" stroke-linejoin="round"/></svg>
<svg style="left:2311px;top:59px;" width="10" height="7" viewBox="0 0 10 7"><path d="M1 1 L5 5 L9 1" stroke="#cccccc" stroke-width="1.3" fill="none"/></svg>
<svg style="left:2335px;top:54px;" width="20" height="20" viewBox="0 0 20 20"><path d="M2 1 H10 L15 6 V19 H2 Z" fill="#1a73e8"/><text x="4.5" y="16" font-size="7" font-family="Liberation Sans" fill="#0b3a80" font-weight="bold">PHP</text><rect x="4" y="10" width="14" height="8" rx="2" fill="none" stroke="#0b3a80" stroke-width="0.8"/></svg>
<svg style="left:2365px;top:54px;" width="22" height="18" viewBox="0 0 22 18"><circle cx="13" cy="9" r="6" stroke="#cccccc" stroke-width="1.8" fill="none"/><path d="M1 9 H7 M4 5.5 L1 9 L4 12.5" stroke="#cccccc" stroke-width="1.8" fill="none"/></svg>
<svg style="left:2396px;top:54px;" width="22" height="18" viewBox="0 0 22 18"><circle cx="11" cy="9" r="5.5" stroke="#8a8a8a" stroke-width="1.6" fill="none"/><path d="M0.5 9 H5.5 M16.5 9 H21.5" stroke="#8a8a8a" stroke-width="1.6"/></svg>
<svg style="left:2427px;top:54px;" width="22" height="18" viewBox="0 0 22 18"><circle cx="8" cy="9" r="5.5" stroke="#8a8a8a" stroke-width="1.6" fill="none"/><path d="M13.5 9 H20 M17 5.5 L20.5 9 L17 12.5" stroke="#8a8a8a" stroke-width="1.6" fill="none"/></svg>
<svg style="left:2458px;top:52px;" width="22" height="22" viewBox="0 0 22 22"><circle cx="11" cy="11" r="9.5" stroke="#cccccc" stroke-width="1.8" fill="none"/><circle cx="9.5" cy="6" r="1.7" fill="#cccccc"/><circle cx="9.5" cy="16" r="1.7" fill="#cccccc"/><circle cx="14.5" cy="10.5" r="1.7" fill="#cccccc"/><path d="M9.5 6 V16 M9.5 6.5 L14.5 10.5" stroke="#cccccc" stroke-width="1.5"/></svg>
<svg style="left:2492px;top:54px;" width="18" height="18" viewBox="0 0 18 18"><rect x="0.9" y="0.9" width="16.2" height="16.2" rx="2.5" stroke="#cccccc" stroke-width="1.6" fill="none"/><path d="M9 1 V17" stroke="#cccccc" stroke-width="1.6"/></svg>
<div class="a" style="left:2525px;top:61px;width:3px;height:3px;background:#cccccc;border-radius:50%"></div>
<div class="a" style="left:2531px;top:61px;width:3px;height:3px;background:#cccccc;border-radius:50%"></div>
<div class="a" style="left:2537px;top:61px;width:3px;height:3px;background:#cccccc;border-radius:50%"></div>
<div class="a" style="left:619px;top:84px;width:1941px;height:26px;background:#1f1f1f;"></div>
<div class="t" style="left:639px;top:89.85px;font-size:15.3px;height:15.3px;line-height:15.3px;color:#a9a9a9;font-weight:normal;font-family:'Liberation Sans', sans-serif;">app</div>
<svg style="left:670px;top:90.5px;" width="9" height="14" viewBox="0 0 9 14"><path d="M1.5 1.5 L7 7 L1.5 12.5" stroke="#a9a9a9" stroke-width="1.5" fill="none"/></svg>
<div class="t" style="left:684px;top:89.85px;font-size:15.3px;height:15.3px;line-height:15.3px;color:#a9a9a9;font-weight:normal;font-family:'Liberation Sans', sans-serif;letter-spacing:-0.458px;">Services</div>
<svg style="left:745px;top:90.5px;" width="9" height="14" viewBox="0 0 9 14"><path d="M1.5 1.5 L7 7 L1.5 12.5" stroke="#a9a9a9" stroke-width="1.5" fill="none"/></svg>
<div class="php" style="left:758px;top:92px"></div>
<div class="t" style="left:785px;top:89.85px;font-size:15.3px;height:15.3px;line-height:15.3px;color:#a9a9a9;font-weight:normal;font-family:'Liberation Sans', sans-serif;">OrderService.php</div>
<svg style="left:908px;top:90.5px;" width="9" height="14" viewBox="0 0 9 14"><path d="M1.5 1.5 L7 7 L1.5 12.5" stroke="#a9a9a9" stroke-width="1.5" fill="none"/></svg>
<div class="t" style="left:923px;top:89.85px;font-size:15.3px;height:15.3px;line-height:15.3px;color:#a9a9a9;font-weight:normal;font-family:'Liberation Sans', sans-serif;">PHP Intelephense</div>
<svg style="left:1051px;top:90.5px;" width="9" height="14" viewBox="0 0 9 14"><path d="M1.5 1.5 L7 7 L1.5 12.5" stroke="#a9a9a9" stroke-width="1.5" fill="none"/></svg>
<svg style="left:1065px;top:89px;" width="16" height="16" viewBox="0 0 16 16"><path d="M1 5 L5 1 L9 5 L5 9 Z" stroke="#ee9d28" stroke-width="1.5" fill="none"/><path d="M7 7 H12 V13 M9 10 H12" stroke="#ee9d28" stroke-width="1.5" fill="none"/><rect x="11" y="7" width="4" height="4" stroke="#ee9d28" stroke-width="1.4" fill="none"/><rect x="11" y="11.5" width="4" height="4" stroke="#ee9d28" stroke-width="1.4" fill="none"/></svg>
<div class="t" style="left:1086px;top:89.85px;font-size:15.3px;height:15.3px;line-height:15.3px;color:#a9a9a9;font-weight:normal;font-family:'Liberation Sans', sans-serif;">OrderService</div>
<svg style="left:1181px;top:90.5px;" width="9" height="14" viewBox="0 0 9 14"><path d="M1.5 1.5 L7 7 L1.5 12.5" stroke="#a9a9a9" stroke-width="1.5" fill="none"/></svg>
<svg style="left:1195px;top:89px;" width="16" height="17" viewBox="0 0 16 17"><path d="M8 1 L15 4.5 V12.5 L8 16 L1 12.5 V4.5 Z M1 4.5 L8 8 L15 4.5 M8 8 V16" stroke="#b180d7" stroke-width="1.4" fill="none" stroke-linejoin="round"/></svg>
<div class="t" style="left:1216px;top:89.85px;font-size:15.3px;height:15.3px;line-height:15.3px;color:#a9a9a9;font-weight:normal;font-family:'Liberation Sans', sans-serif;">upsertRequest</div>
<div class="a" style="left:619px;top:110px;width:1941px;height:885px;background:#1f1f1f;"></div>
<div class="a" style="left:711px;top:517.6px;width:1832px;height:22.8px;background:transparent;border-top:1px solid #282828;border-bottom:1px solid #282828"></div>
<div class="a" style="left:710.0px;top:175.6px;width:1px;height:23.3px;background:#404040;"></div>
<div class="a" style="left:746.96px;top:175.6px;width:1px;height:23.3px;background:#404040;"></div>
<div class="a" style="left:710.0px;top:198.4px;width:1px;height:23.3px;background:#404040;"></div>
<div class="a" style="left:746.96px;top:198.4px;width:1px;height:23.3px;background:#404040;"></div>
<div class="a" style="left:710.0px;top:221.2px;width:1px;height:23.3px;background:#404040;"></div>
<div class="a" style="left:746.96px;top:221.2px;width:1px;height:23.3px;background:#404040;"></div>
<div class="a" style="left:710.0px;top:244.0px;width:1px;height:23.3px;background:#404040;"></div>
<div class="a" style="left:746.96px;top:244.0px;width:1px;height:23.3px;background:#404040;"></div>
<div class="a" style="left:710.0px;top:266.8px;width:1px;height:23.3px;background:#404040;"></div>
<div class="a" style="left:746.96px;top:266.8px;width:1px;height:23.3px;background:#404040;"></div>
<div class="a" style="left:710.0px;top:289.6px;width:1px;height:23.3px;background:#404040;"></div>
<div class="a" style="left:746.96px;top:289.6px;width:1px;height:23.3px;background:#404040;"></div>
<div class="a" style="left:783.92px;top:289.6px;width:1px;height:23.3px;background:#404040;"></div>
<div class="a" style="left:710.0px;top:312.4px;width:1px;height:23.3px;background:#404040;"></div>
<div class="a" style="left:746.96px;top:312.4px;width:1px;height:23.3px;background:#404040;"></div>
<div class="a" style="left:783.92px;top:312.4px;width:1px;height:23.3px;background:#404040;"></div>
<div class="a" style="left:820.88px;top:312.4px;width:1px;height:23.3px;background:#404040;"></div>
<div class="a" style="left:857.84px;top:312.4px;width:1px;height:23.3px;background:#404040;"></div>
<div class="a" style="left:710.0px;top:335.2px;width:1px;height:23.3px;background:#404040;"></div>
<div class="a" style="left:746.96px;top:335.2px;width:1px;height:23.3px;background:#404040;"></div>
<div class="a" style="left:783.92px;top:335.2px;width:1px;height:23.3px;background:#404040;"></div>
<div class="a" style="left:820.88px;top:335.2px;width:1px;height:23.3px;background:#404040;"></div>
<div class="a" style="left:710.0px;top:358.0px;width:1px;height:23.3px;background:#404040;"></div>
<div class="a" style="left:746.96px;top:358.0px;width:1px;height:23.3px;background:#404040;"></div>
<div class="a" style="left:783.92px;top:358.0px;width:1px;height:23.3px;background:#404040;"></div>
<div class="a" style="left:710.0px;top:380.8px;width:1px;height:23.3px;background:#404040;"></div>
<div class="a" style="left:746.96px;top:380.8px;width:1px;height:23.3px;background:#404040;"></div>
<div class="a" style="left:710.0px;top:403.6px;width:1px;height:23.3px;background:#404040;"></div>
<div class="a" style="left:746.96px;top:403.6px;width:1px;height:23.3px;background:#404040;"></div>
<div class="a" style="left:710.0px;top:426.4px;width:1px;height:23.3px;background:#404040;"></div>
<div class="a" style="left:746.96px;top:426.4px;width:1px;height:23.3px;background:#404040;"></div>
<div class="a" style="left:710.0px;top:449.20000000000005px;width:1px;height:23.3px;background:#404040;"></div>
<div class="a" style="left:746.96px;top:449.20000000000005px;width:1px;height:23.3px;background:#404040;"></div>
<div class="a" style="left:710.0px;top:472.0px;width:1px;height:23.3px;background:#404040;"></div>
<div class="a" style="left:746.96px;top:472.0px;width:1px;height:23.3px;background:#404040;"></div>
<div class="a" style="left:710.0px;top:494.79999999999995px;width:1px;height:23.3px;background:#404040;"></div>
<div class="a" style="left:746.96px;top:494.79999999999995px;width:1px;height:23.3px;background:#404040;"></div>
<div class="a" style="left:783.92px;top:494.79999999999995px;width:1px;height:23.3px;background:#707070;"></div>
<div class="a" style="left:710.0px;top:517.6px;width:1px;height:23.3px;background:#404040;"></div>
<div class="a" style="left:746.96px;top:517.6px;width:1px;height:23.3px;background:#404040;"></div>
<div class="a" style="left:783.92px;top:517.6px;width:1px;height:23.3px;background:#707070;"></div>
<div class="a" style="left:710.0px;top:540.4px;width:1px;height:23.3px;background:#404040;"></div>
<div class="a" style="left:746.96px;top:540.4px;width:1px;height:23.3px;background:#404040;"></div>
<div class="a" style="left:783.92px;top:540.4px;width:1px;height:23.3px;background:#707070;"></div>
<div class="a" style="left:710.0px;top:563.2px;width:1px;height:23.3px;background:#404040;"></div>
<div class="a" style="left:746.96px;top:563.2px;width:1px;height:23.3px;background:#404040;"></div>
<div class="a" style="left:783.92px;top:563.2px;width:1px;height:23.3px;background:#707070;"></div>
<div class="a" style="left:710.0px;top:586.0px;width:1px;height:23.3px;background:#404040;"></div>
<div class="a" style="left:746.96px;top:586.0px;width:1px;height:23.3px;background:#404040;"></div>
<div class="a" style="left:783.92px;top:586.0px;width:1px;height:23.3px;background:#707070;"></div>
<div class="a" style="left:710.0px;top:608.8px;width:1px;height:23.3px;background:#404040;"></div>
<div class="a" style="left:746.96px;top:608.8px;width:1px;height:23.3px;background:#404040;"></div>
<div class="a" style="left:783.92px;top:608.8px;width:1px;height:23.3px;background:#707070;"></div>
<div class="a" style="left:710.0px;top:631.6px;width:1px;height:23.3px;background:#404040;"></div>
<div class="a" style="left:746.96px;top:631.6px;width:1px;height:23.3px;background:#404040;"></div>
<div class="a" style="left:783.92px;top:631.6px;width:1px;height:23.3px;background:#707070;"></div>
<div class="a" style="left:710.0px;top:654.4px;width:1px;height:23.3px;background:#404040;"></div>
<div class="a" style="left:746.96px;top:654.4px;width:1px;height:23.3px;background:#404040;"></div>
<div class="a" style="left:783.92px;top:654.4px;width:1px;height:23.3px;background:#707070;"></div>
<div class="a" style="left:710.0px;top:677.2px;width:1px;height:23.3px;background:#404040;"></div>
<div class="a" style="left:746.96px;top:677.2px;width:1px;height:23.3px;background:#404040;"></div>
<div class="a" style="left:783.92px;top:677.2px;width:1px;height:23.3px;background:#707070;"></div>
<div class="a" style="left:710.0px;top:700.0px;width:1px;height:23.3px;background:#404040;"></div>
<div class="a" style="left:746.96px;top:700.0px;width:1px;height:23.3px;background:#404040;"></div>
<div class="a" style="left:710.0px;top:722.8000000000001px;width:1px;height:23.3px;background:#404040;"></div>
<div class="a" style="left:746.96px;top:722.8000000000001px;width:1px;height:23.3px;background:#404040;"></div>
<div class="a" style="left:710.0px;top:745.6px;width:1px;height:23.3px;background:#404040;"></div>
<div class="a" style="left:746.96px;top:745.6px;width:1px;height:23.3px;background:#404040;"></div>
<div class="a" style="left:710.0px;top:768.4000000000001px;width:1px;height:23.3px;background:#404040;"></div>
<div class="a" style="left:746.96px;top:768.4000000000001px;width:1px;height:23.3px;background:#404040;"></div>
<div class="a" style="left:783.92px;top:768.4000000000001px;width:1px;height:23.3px;background:#404040;"></div>
<div class="a" style="left:710.0px;top:791.2px;width:1px;height:23.3px;background:#404040;"></div>
<div class="a" style="left:746.96px;top:791.2px;width:1px;height:23.3px;background:#404040;"></div>
<div class="a" style="left:783.92px;top:791.2px;width:1px;height:23.3px;background:#404040;"></div>
<div class="a" style="left:710.0px;top:814.0px;width:1px;height:23.3px;background:#404040;"></div>
<div class="a" style="left:746.96px;top:814.0px;width:1px;height:23.3px;background:#404040;"></div>
<div class="a" style="left:783.92px;top:814.0px;width:1px;height:23.3px;background:#404040;"></div>
<div class="a" style="left:710.0px;top:836.8000000000001px;width:1px;height:23.3px;background:#404040;"></div>
<div class="a" style="left:746.96px;top:836.8000000000001px;width:1px;height:23.3px;background:#404040;"></div>
<div class="a" style="left:783.92px;top:836.8000000000001px;width:1px;height:23.3px;background:#404040;"></div>
<div class="a" style="left:820.88px;top:836.8000000000001px;width:1px;height:23.3px;background:#404040;"></div>
<div class="a" style="left:710.0px;top:859.6px;width:1px;height:23.3px;background:#404040;"></div>
<div class="a" style="left:746.96px;top:859.6px;width:1px;height:23.3px;background:#404040;"></div>
<div class="a" style="left:783.92px;top:859.6px;width:1px;height:23.3px;background:#404040;"></div>
<div class="a" style="left:710.0px;top:882.4000000000001px;width:1px;height:23.3px;background:#404040;"></div>
<div class="a" style="left:746.96px;top:882.4000000000001px;width:1px;height:23.3px;background:#404040;"></div>
<div class="a" style="left:783.92px;top:882.4000000000001px;width:1px;height:23.3px;background:#404040;"></div>
<div class="a" style="left:820.88px;top:882.4000000000001px;width:1px;height:23.3px;background:#404040;"></div>
<div class="a" style="left:710.0px;top:905.2px;width:1px;height:23.3px;background:#404040;"></div>
<div class="a" style="left:746.96px;top:905.2px;width:1px;height:23.3px;background:#404040;"></div>
<div class="a" style="left:783.92px;top:905.2px;width:1px;height:23.3px;background:#404040;"></div>
<div class="a" style="left:820.88px;top:905.2px;width:1px;height:23.3px;background:#404040;"></div>
<div class="a" style="left:857.84px;top:905.2px;width:1px;height:23.3px;background:#404040;"></div>
<div class="a" style="left:710.0px;top:928.0px;width:1px;height:23.3px;background:#404040;"></div>
<div class="a" style="left:746.96px;top:928.0px;width:1px;height:23.3px;background:#404040;"></div>
<div class="a" style="left:783.92px;top:928.0px;width:1px;height:23.3px;background:#404040;"></div>
<div class="a" style="left:820.88px;top:928.0px;width:1px;height:23.3px;background:#404040;"></div>
<div class="a" style="left:710.0px;top:950.8000000000001px;width:1px;height:23.3px;background:#404040;"></div>
<div class="a" style="left:746.96px;top:950.8000000000001px;width:1px;height:23.3px;background:#404040;"></div>
<div class="a" style="left:783.92px;top:950.8000000000001px;width:1px;height:23.3px;background:#404040;"></div>
<div class="a" style="left:710.0px;top:973.6px;width:1px;height:23.3px;background:#404040;"></div>
<div class="a" style="left:746.96px;top:973.6px;width:1px;height:23.3px;background:#404040;"></div>
<div class="a" style="left:783.92px;top:973.6px;width:1px;height:23.3px;background:#404040;"></div>
<div class="t mono" style="left:619px;width:60px;text-align:right;top:154.30px;height:22.8px;line-height:22.8px;font-size:16.4px;letter-spacing:-0.6px;color:#6e7681">671</div>
<div class="t mono" style="left:711px;top:154.30px;height:22.8px;line-height:22.8px;font-size:16.4px;letter-spacing:-0.6px;color:#d4d4d4"></div>
<div class="a" style="left:710px;top:152.79999999999998px;width:1px;height:22.8px;background:#404040;"></div>
<div class="a" style="left:746.96px;top:152.79999999999998px;width:1px;height:22.8px;background:#404040;"></div>
<div class="t mono" style="left:619px;width:60px;text-align:right;top:177.10px;height:22.8px;line-height:22.8px;font-size:16.4px;letter-spacing:-0.6px;color:#6e7681">672</div>
<div class="t mono" style="left:711px;top:177.10px;height:22.8px;line-height:22.8px;font-size:16.4px;letter-spacing:-0.6px;color:#d4d4d4">        <span style="color:#6a9955;">//Вообще, с фронта уже не должны лететь скрытые поля. Но фильтруем их тут дополнительно</span></div>
<div class="t mono" style="left:619px;width:60px;text-align:right;top:199.90px;height:22.8px;line-height:22.8px;font-size:16.4px;letter-spacing:-0.6px;color:#6e7681">673</div>
<div class="t mono" style="left:711px;top:199.90px;height:22.8px;line-height:22.8px;font-size:16.4px;letter-spacing:-0.6px;color:#d4d4d4">        <span style="color:#9cdcfe;">$o_io_fields</span> <span style="color:#d4d4d4;">=</span> <span style="color:#179fff;">(</span><span style="color:#569cd6;">New</span> <span style="color:#4ec9b0;">OptionalFieldsService</span><span style="color:#ffd700;">(</span><span style="color:#ffd700;">)</span><span style="color:#179fff;">)</span><span style="color:#d4d4d4;">-</span><span style="color:#d4d4d4;">&gt;</span><span style="color:#dcdcaa;">getOptionalFields</span><span style="color:#179fff;">(</span><span style="color:#9cdcfe;">$io</span><span style="color:#ffd700;">[</span><span style="color:#ce9178;">&#x27;test_object_type_id&#x27;</span><span style="color:#ffd700;">]</span><span style="color:#d4d4d4;">,</span> <span style="color:#9cdcfe;">$io</span><span style="color:#ffd700;">[</span><span style="color:#ce9178;">&#x27;test_object_group_id&#x27;</span><span style="color:#ffd700;">]</span><span style="color:#d4d4d4;">,</span> <span style="color:#ce9178;">&#x27;incoming_object&#x27;</span><span style="color:#179fff;">)</span><span style="color:#d4d4d4;">;</span></div>
<div class="t mono" style="left:619px;width:60px;text-align:right;top:222.70px;height:22.8px;line-height:22.8px;font-size:16.4px;letter-spacing:-0.6px;color:#6e7681">674</div>
<div class="t mono" style="left:711px;top:222.70px;height:22.8px;line-height:22.8px;font-size:16.4px;letter-spacing:-0.6px;color:#d4d4d4">        <span style="color:#9cdcfe;">$o_io_fields</span> <span style="color:#d4d4d4;">=</span> <span style="color:#dcdcaa;">array_column</span><span style="color:#179fff;">(</span><span style="color:#9cdcfe;">$o_io_fields</span><span style="color:#d4d4d4;">,</span> <span style="color:#ce9178;">&#x27;name&#x27;</span><span style="color:#179fff;">)</span><span style="color:#d4d4d4;">;</span></div>
<div class="t mono" style="left:619px;width:60px;text-align:right;top:245.50px;height:22.8px;line-height:22.8px;font-size:16.4px;letter-spacing:-0.6px;color:#6e7681">675</div>
<div class="t mono" style="left:711px;top:245.50px;height:22.8px;line-height:22.8px;font-size:16.4px;letter-spacing:-0.6px;color:#d4d4d4">        <span style="color:#9cdcfe;">$io_fields</span> <span style="color:#d4d4d4;">=</span> <span style="color:#dcdcaa;">array_merge</span><span style="color:#179fff;">(</span><span style="color:#9cdcfe;">$io_fields</span><span style="color:#d4d4d4;">,</span> <span style="color:#9cdcfe;">$o_io_fields</span><span style="color:#179fff;">)</span><span style="color:#d4d4d4;">;</span>   <span style="color:#6a9955;">//Забираем динамические поля для IO</span></div>
<div class="t mono" style="left:619px;width:60px;text-align:right;top:268.30px;height:22.8px;line-height:22.8px;font-size:16.4px;letter-spacing:-0.6px;color:#6e7681">676</div>
<div class="t mono" style="left:711px;top:268.30px;height:22.8px;line-height:22.8px;font-size:16.4px;letter-spacing:-0.6px;color:#d4d4d4">        <span style="color:#c586c0;">foreach</span><span style="color:#179fff;">(</span><span style="color:#9cdcfe;">$io_fields</span> <span style="color:#c586c0;">as</span> <span style="color:#9cdcfe;">$f</span><span style="color:#179fff;">)</span> <span style="color:#179fff;">{</span></div>
<div class="t mono" style="left:619px;width:60px;text-align:right;top:291.10px;height:22.8px;line-height:22.8px;font-size:16.4px;letter-spacing:-0.6px;color:#6e7681">677</div>
<div class="t mono" style="left:711px;top:291.10px;height:22.8px;line-height:22.8px;font-size:16.4px;letter-spacing:-0.6px;color:#d4d4d4">            <span style="color:#c586c0;">if</span><span style="color:#ffd700;">(</span><span style="color:#dcdcaa;">isset</span><span style="color:#da70d6;">(</span><span style="color:#9cdcfe;">$d</span><span style="color:#179fff;">[</span><span style="color:#9cdcfe;">$f</span><span style="color:#179fff;">]</span><span style="color:#da70d6;">)</span><span style="color:#ffd700;">)</span> <span style="color:#ffd700;">{</span></div>
<div class="t mono" style="left:619px;width:60px;text-align:right;top:313.90px;height:22.8px;line-height:22.8px;font-size:16.4px;letter-spacing:-0.6px;color:#6e7681">678</div>
<div class="t mono" style="left:711px;top:313.90px;height:22.8px;line-height:22.8px;font-size:16.4px;letter-spacing:-0.6px;color:#d4d4d4">                 <span style="color:#9cdcfe;">$io_d</span><span style="color:#da70d6;">[</span><span style="color:#9cdcfe;">$f</span><span style="color:#da70d6;">]</span> <span style="color:#d4d4d4;">=</span> <span style="color:#4ec9b0;">Arr</span><span style="color:#d4d4d4;">:</span><span style="color:#d4d4d4;">:</span><span style="color:#dcdcaa;">get</span><span style="color:#da70d6;">(</span><span style="color:#9cdcfe;">$d</span><span style="color:#d4d4d4;">,</span> <span style="color:#9cdcfe;">$f</span><span style="color:#da70d6;">)</span><span style="color:#d4d4d4;">;</span>       <span style="color:#6a9955;">// Заполняем динамические данные</span></div>
<div class="t mono" style="left:619px;width:60px;text-align:right;top:336.70px;height:22.8px;line-height:22.8px;font-size:16.4px;letter-spacing:-0.6px;color:#6e7681">679</div>
<div class="t mono" style="left:711px;top:336.70px;height:22.8px;line-height:22.8px;font-size:16.4px;letter-spacing:-0.6px;color:#d4d4d4">                <span style="color:#dcdcaa;">unset</span><span style="color:#da70d6;">(</span><span style="color:#9cdcfe;">$d</span><span style="color:#179fff;">[</span><span style="color:#9cdcfe;">$f</span><span style="color:#179fff;">]</span><span style="color:#da70d6;">)</span><span style="color:#d4d4d4;">;</span>                                  <span style="color:#6a9955;">// Выпиливаем из массива данных</span></div>
<div class="t mono" style="left:619px;width:60px;text-align:right;top:359.50px;height:22.8px;line-height:22.8px;font-size:16.4px;letter-spacing:-0.6px;color:#6e7681">680</div>
<div class="t mono" style="left:711px;top:359.50px;height:22.8px;line-height:22.8px;font-size:16.4px;letter-spacing:-0.6px;color:#d4d4d4">            <span style="color:#ffd700;">}</span></div>
<div class="t mono" style="left:619px;width:60px;text-align:right;top:382.30px;height:22.8px;line-height:22.8px;font-size:16.4px;letter-spacing:-0.6px;color:#6e7681">681</div>
<div class="t mono" style="left:711px;top:382.30px;height:22.8px;line-height:22.8px;font-size:16.4px;letter-spacing:-0.6px;color:#d4d4d4">        <span style="color:#179fff;">}</span></div>
<div class="t mono" style="left:619px;width:60px;text-align:right;top:405.10px;height:22.8px;line-height:22.8px;font-size:16.4px;letter-spacing:-0.6px;color:#6e7681">682</div>
<div class="t mono" style="left:711px;top:405.10px;height:22.8px;line-height:22.8px;font-size:16.4px;letter-spacing:-0.6px;color:#d4d4d4">        <span style="color:#6a9955;">//</span></div>
<div class="t mono" style="left:619px;width:60px;text-align:right;top:427.90px;height:22.8px;line-height:22.8px;font-size:16.4px;letter-spacing:-0.6px;color:#6e7681">683</div>
<div class="t mono" style="left:711px;top:427.90px;height:22.8px;line-height:22.8px;font-size:16.4px;letter-spacing:-0.6px;color:#d4d4d4">        <span style="color:#6a9955;">////////////////////////////////////////////////////////</span></div>
<div class="t mono" style="left:619px;width:60px;text-align:right;top:450.70px;height:22.8px;line-height:22.8px;font-size:16.4px;letter-spacing:-0.6px;color:#6e7681">684</div>
<div class="t mono" style="left:711px;top:450.70px;height:22.8px;line-height:22.8px;font-size:16.4px;letter-spacing:-0.6px;color:#d4d4d4"></div>
<div class="t mono" style="left:619px;width:60px;text-align:right;top:473.50px;height:22.8px;line-height:22.8px;font-size:16.4px;letter-spacing:-0.6px;color:#6e7681">685</div>
<div class="t mono" style="left:711px;top:473.50px;height:22.8px;line-height:22.8px;font-size:16.4px;letter-spacing:-0.6px;color:#d4d4d4">        <span style="color:#9cdcfe;">$data</span> <span style="color:#d4d4d4;">=</span> <span style="color:#179fff;">[</span></div>
<div class="t mono" style="left:619px;width:60px;text-align:right;top:496.30px;height:22.8px;line-height:22.8px;font-size:16.4px;letter-spacing:-0.6px;color:#6e7681">686</div>
<div class="t mono" style="left:711px;top:496.30px;height:22.8px;line-height:22.8px;font-size:16.4px;letter-spacing:-0.6px;color:#d4d4d4">            <span style="color:#ce9178;">&#x27;order_id&#x27;</span> <span style="color:#d4d4d4;">=</span><span style="color:#d4d4d4;">&gt;</span> <span style="color:#9cdcfe;">$order</span><span style="color:#d4d4d4;">-</span><span style="color:#d4d4d4;">&gt;</span><span style="color:#9cdcfe;">id</span><span style="color:#d4d4d4;">,</span></div>
<div class="t mono" style="left:619px;width:60px;text-align:right;top:519.10px;height:22.8px;line-height:22.8px;font-size:16.4px;letter-spacing:-0.6px;color:#cccccc">687</div>
<div class="t mono" style="left:711px;top:519.10px;height:22.8px;line-height:22.8px;font-size:16.4px;letter-spacing:-0.6px;color:#d4d4d4"></div>
<div class="t mono" style="left:619px;width:60px;text-align:right;top:541.90px;height:22.8px;line-height:22.8px;font-size:16.4px;letter-spacing:-0.6px;color:#6e7681">688</div>
<div class="t mono" style="left:711px;top:541.90px;height:22.8px;line-height:22.8px;font-size:16.4px;letter-spacing:-0.6px;color:#d4d4d4">            <span style="color:#ce9178;">&#x27;acting_person&#x27;</span> <span style="color:#d4d4d4;">=</span><span style="color:#d4d4d4;">&gt;</span> <span style="color:#4ec9b0;">Arr</span><span style="color:#d4d4d4;">:</span><span style="color:#d4d4d4;">:</span><span style="color:#dcdcaa;">get</span><span style="color:#ffd700;">(</span><span style="color:#9cdcfe;">$d</span><span style="color:#d4d4d4;">,</span> <span style="color:#ce9178;">&#x27;acting_person&#x27;</span><span style="color:#ffd700;">)</span><span style="color:#d4d4d4;">,</span></div>
<div class="t mono" style="left:619px;width:60px;text-align:right;top:564.70px;height:22.8px;line-height:22.8px;font-size:16.4px;letter-spacing:-0.6px;color:#6e7681">689</div>
<div class="t mono" style="left:711px;top:564.70px;height:22.8px;line-height:22.8px;font-size:16.4px;letter-spacing:-0.6px;color:#d4d4d4">            <span style="color:#ce9178;">&#x27;acting_contragent_id&#x27;</span> <span style="color:#d4d4d4;">=</span><span style="color:#d4d4d4;">&gt;</span> <span style="color:#4ec9b0;">Arr</span><span style="color:#d4d4d4;">:</span><span style="color:#d4d4d4;">:</span><span style="color:#dcdcaa;">get</span><span style="color:#ffd700;">(</span><span style="color:#9cdcfe;">$d</span><span style="color:#d4d4d4;">,</span> <span style="color:#ce9178;">&#x27;acting_contragent&#x27;</span><span style="color:#ffd700;">)</span><span style="color:#d4d4d4;">,</span></div>
<div class="t mono" style="left:619px;width:60px;text-align:right;top:587.50px;height:22.8px;line-height:22.8px;font-size:16.4px;letter-spacing:-0.6px;color:#6e7681">690</div>
<div class="t mono" style="left:711px;top:587.50px;height:22.8px;line-height:22.8px;font-size:16.4px;letter-spacing:-0.6px;color:#d4d4d4">            <span style="color:#ce9178;">&#x27;act_vr_id&#x27;</span> <span style="color:#d4d4d4;">=</span><span style="color:#d4d4d4;">&gt;</span> <span style="color:#4ec9b0;">Arr</span><span style="color:#d4d4d4;">:</span><span style="color:#d4d4d4;">:</span><span style="color:#dcdcaa;">get</span><span style="color:#ffd700;">(</span><span style="color:#9cdcfe;">$d</span><span style="color:#d4d4d4;">,</span> <span style="color:#ce9178;">&#x27;act_sampling_id&#x27;</span><span style="color:#ffd700;">)</span><span style="color:#d4d4d4;">,</span></div>
<div class="t mono" style="left:619px;width:60px;text-align:right;top:610.30px;height:22.8px;line-height:22.8px;font-size:16.4px;letter-spacing:-0.6px;color:#6e7681">691</div>
<div class="t mono" style="left:711px;top:610.30px;height:22.8px;line-height:22.8px;font-size:16.4px;letter-spacing:-0.6px;color:#d4d4d4">            <span style="color:#ce9178;">&#x27;provide_protocol_scan&#x27;</span> <span style="color:#d4d4d4;">=</span><span style="color:#d4d4d4;">&gt;</span> <span style="color:#ffd700;">(</span><span style="color:#569cd6;">bool</span><span style="color:#ffd700;">)</span><span style="color:#4ec9b0;">Arr</span><span style="color:#d4d4d4;">:</span><span style="color:#d4d4d4;">:</span><span style="color:#dcdcaa;">get</span><span style="color:#ffd700;">(</span><span style="color:#9cdcfe;">$d</span><span style="color:#d4d4d4;">,</span> <span style="color:#ce9178;">&#x27;provide_protocol_scan&#x27;</span><span style="color:#d4d4d4;">,</span> <span style="color:#569cd6;">false</span><span style="color:#ffd700;">)</span><span style="color:#d4d4d4;">,</span></div>
<div class="t mono" style="left:619px;width:60px;text-align:right;top:633.10px;height:22.8px;line-height:22.8px;font-size:16.4px;letter-spacing:-0.6px;color:#6e7681">692</div>
<div class="t mono" style="left:711px;top:633.10px;height:22.8px;line-height:22.8px;font-size:16.4px;letter-spacing:-0.6px;color:#d4d4d4">            <span style="color:#ce9178;">&#x27;samples_accepted_from&#x27;</span> <span style="color:#d4d4d4;">=</span><span style="color:#d4d4d4;">&gt;</span> <span style="color:#4ec9b0;">Arr</span><span style="color:#d4d4d4;">:</span><span style="color:#d4d4d4;">:</span><span style="color:#dcdcaa;">get</span><span style="color:#ffd700;">(</span><span style="color:#9cdcfe;">$d</span><span style="color:#d4d4d4;">,</span> <span style="color:#ce9178;">&#x27;samples_accepted_from&#x27;</span><span style="color:#ffd700;">)</span><span style="color:#d4d4d4;">,</span></div>
<div class="t mono" style="left:619px;width:60px;text-align:right;top:655.90px;height:22.8px;line-height:22.8px;font-size:16.4px;letter-spacing:-0.6px;color:#6e7681">693</div>
<div class="t mono" style="left:711px;top:655.90px;height:22.8px;line-height:22.8px;font-size:16.4px;letter-spacing:-0.6px;color:#d4d4d4">            <span style="color:#ce9178;">&#x27;samples_non_returnable&#x27;</span> <span style="color:#d4d4d4;">=</span><span style="color:#d4d4d4;">&gt;</span> <span style="color:#ffd700;">(</span><span style="color:#569cd6;">bool</span><span style="color:#ffd700;">)</span><span style="color:#4ec9b0;">Arr</span><span style="color:#d4d4d4;">:</span><span style="color:#d4d4d4;">:</span><span style="color:#dcdcaa;">get</span><span style="color:#ffd700;">(</span><span style="color:#9cdcfe;">$d</span><span style="color:#d4d4d4;">,</span> <span style="color:#ce9178;">&#x27;samples_non_returnable&#x27;</span><span style="color:#d4d4d4;">,</span> <span style="color:#569cd6;">false</span><span style="color:#ffd700;">)</span><span style="color:#d4d4d4;">,</span></div>
<div class="t mono" style="left:619px;width:60px;text-align:right;top:678.70px;height:22.8px;line-height:22.8px;font-size:16.4px;letter-spacing:-0.6px;color:#6e7681">694</div>
<div class="t mono" style="left:711px;top:678.70px;height:22.8px;line-height:22.8px;font-size:16.4px;letter-spacing:-0.6px;color:#d4d4d4">            <span style="color:#ce9178;">&#x27;comment&#x27;</span> <span style="color:#d4d4d4;">=</span><span style="color:#d4d4d4;">&gt;</span> <span style="color:#4ec9b0;">Arr</span><span style="color:#d4d4d4;">:</span><span style="color:#d4d4d4;">:</span><span style="color:#dcdcaa;">get</span><span style="color:#ffd700;">(</span><span style="color:#9cdcfe;">$request</span><span style="color:#d4d4d4;">,</span> <span style="color:#ce9178;">&#x27;comment&#x27;</span><span style="color:#ffd700;">)</span><span style="color:#d4d4d4;">,</span></div>
<div class="t mono" style="left:619px;width:60px;text-align:right;top:701.50px;height:22.8px;line-height:22.8px;font-size:16.4px;letter-spacing:-0.6px;color:#6e7681">695</div>
<div class="t mono" style="left:711px;top:701.50px;height:22.8px;line-height:22.8px;font-size:16.4px;letter-spacing:-0.6px;color:#d4d4d4">        <span style="color:#179fff;">]</span><span style="color:#d4d4d4;">;</span></div>
<div class="t mono" style="left:619px;width:60px;text-align:right;top:724.30px;height:22.8px;line-height:22.8px;font-size:16.4px;letter-spacing:-0.6px;color:#6e7681">696</div>
<div class="t mono" style="left:711px;top:724.30px;height:22.8px;line-height:22.8px;font-size:16.4px;letter-spacing:-0.6px;color:#d4d4d4"></div>
<div class="t mono" style="left:619px;width:60px;text-align:right;top:747.10px;height:22.8px;line-height:22.8px;font-size:16.4px;letter-spacing:-0.6px;color:#6e7681">697</div>
<div class="t mono" style="left:711px;top:747.10px;height:22.8px;line-height:22.8px;font-size:16.4px;letter-spacing:-0.6px;color:#d4d4d4">        <span style="color:#c586c0;">if</span> <span style="color:#179fff;">(</span><span style="color:#9cdcfe;">$model</span><span style="color:#179fff;">)</span> <span style="color:#179fff;">{</span></div>
<div class="t mono" style="left:619px;width:60px;text-align:right;top:769.90px;height:22.8px;line-height:22.8px;font-size:16.4px;letter-spacing:-0.6px;color:#6e7681">698</div>
<div class="t mono" style="left:711px;top:769.90px;height:22.8px;line-height:22.8px;font-size:16.4px;letter-spacing:-0.6px;color:#d4d4d4">            <span style="color:#9cdcfe;">$model</span><span style="color:#d4d4d4;">-</span><span style="color:#d4d4d4;">&gt;</span><span style="color:#dcdcaa;">fill</span><span style="color:#ffd700;">(</span><span style="color:#9cdcfe;">$data</span><span style="color:#ffd700;">)</span><span style="color:#d4d4d4;">;</span></div>
<div class="t mono" style="left:619px;width:60px;text-align:right;top:792.70px;height:22.8px;line-height:22.8px;font-size:16.4px;letter-spacing:-0.6px;color:#6e7681">699</div>
<div class="t mono" style="left:711px;top:792.70px;height:22.8px;line-height:22.8px;font-size:16.4px;letter-spacing:-0.6px;color:#d4d4d4"></div>
<div class="t mono" style="left:619px;width:60px;text-align:right;top:815.50px;height:22.8px;line-height:22.8px;font-size:16.4px;letter-spacing:-0.6px;color:#6e7681">700</div>
<div class="t mono" style="left:711px;top:815.50px;height:22.8px;line-height:22.8px;font-size:16.4px;letter-spacing:-0.6px;color:#d4d4d4">            <span style="color:#c586c0;">if</span> <span style="color:#ffd700;">(</span><span style="color:#dcdcaa;">array_key_exists</span><span style="color:#da70d6;">(</span><span style="color:#ce9178;">&#x27;number&#x27;</span><span style="color:#d4d4d4;">,</span> <span style="color:#9cdcfe;">$request</span><span style="color:#da70d6;">)</span> <span style="color:#d4d4d4;">&amp;</span><span style="color:#d4d4d4;">&amp;</span> <span style="color:#9cdcfe;">$request</span><span style="color:#da70d6;">[</span><span style="color:#ce9178;">&#x27;number&#x27;</span><span style="color:#da70d6;">]</span> <span style="color:#d4d4d4;">!</span><span style="color:#d4d4d4;">=</span><span style="color:#d4d4d4;">=</span> <span style="color:#569cd6;">null</span> <span style="color:#d4d4d4;">&amp;</span><span style="color:#d4d4d4;">&amp;</span> <span style="color:#9cdcfe;">$request</span><span style="color:#da70d6;">[</span><span style="color:#ce9178;">&#x27;number&#x27;</span><span style="color:#da70d6;">]</span> <span style="color:#d4d4d4;">!</span><span style="color:#d4d4d4;">=</span><span style="color:#d4d4d4;">=</span> <span style="color:#ce9178;">&#x27;&#x27;</span><span style="color:#ffd700;">)</span> <span style="color:#ffd700;">{</span></div>
<div class="t mono" style="left:619px;width:60px;text-align:right;top:838.30px;height:22.8px;line-height:22.8px;font-size:16.4px;letter-spacing:-0.6px;color:#6e7681">701</div>
<div class="t mono" style="left:711px;top:838.30px;height:22.8px;line-height:22.8px;font-size:16.4px;letter-spacing:-0.6px;color:#d4d4d4">                <span style="color:#9cdcfe;">$model</span><span style="color:#d4d4d4;">-</span><span style="color:#d4d4d4;">&gt;</span><span style="color:#9cdcfe;">number</span> <span style="color:#d4d4d4;">=</span> <span style="color:#9cdcfe;">$request</span><span style="color:#da70d6;">[</span><span style="color:#ce9178;">&#x27;number&#x27;</span><span style="color:#da70d6;">]</span><span style="color:#d4d4d4;">;</span></div>
<div class="t mono" style="left:619px;width:60px;text-align:right;top:861.10px;height:22.8px;line-height:22.8px;font-size:16.4px;letter-spacing:-0.6px;color:#6e7681">702</div>
<div class="t mono" style="left:711px;top:861.10px;height:22.8px;line-height:22.8px;font-size:16.4px;letter-spacing:-0.6px;color:#d4d4d4">            <span style="color:#ffd700;">}</span> <span style="color:#c586c0;">else</span> <span style="color:#ffd700;">{</span></div>
<div class="t mono" style="left:619px;width:60px;text-align:right;top:883.90px;height:22.8px;line-height:22.8px;font-size:16.4px;letter-spacing:-0.6px;color:#6e7681">703</div>
<div class="t mono" style="left:711px;top:883.90px;height:22.8px;line-height:22.8px;font-size:16.4px;letter-spacing:-0.6px;color:#d4d4d4">                <span style="color:#c586c0;">if</span> <span style="color:#da70d6;">(</span><span style="color:#179fff;">(</span><span style="color:#9cdcfe;">$request</span><span style="color:#ffd700;">[</span><span style="color:#ce9178;">&#x27;status&#x27;</span><span style="color:#ffd700;">]</span> <span style="color:#d4d4d4;">?</span><span style="color:#d4d4d4;">?</span> <span style="color:#b5cea8;">1</span><span style="color:#179fff;">)</span> <span style="color:#d4d4d4;">=</span><span style="color:#d4d4d4;">=</span> <span style="color:#b5cea8;">2</span><span style="color:#da70d6;">)</span> <span style="color:#da70d6;">{</span></div>
<div class="t mono" style="left:619px;width:60px;text-align:right;top:906.70px;height:22.8px;line-height:22.8px;font-size:16.4px;letter-spacing:-0.6px;color:#6e7681">704</div>
<div class="t mono" style="left:711px;top:906.70px;height:22.8px;line-height:22.8px;font-size:16.4px;letter-spacing:-0.6px;color:#d4d4d4">                    <span style="color:#4ec9b0;">Numerator</span><span style="color:#d4d4d4;">:</span><span style="color:#d4d4d4;">:</span><span style="color:#dcdcaa;">setNewNumber</span><span style="color:#179fff;">(</span><span style="color:#9cdcfe;">$model</span><span style="color:#179fff;">)</span><span style="color:#d4d4d4;">;</span></div>
<div class="t mono" style="left:619px;width:60px;text-align:right;top:929.50px;height:22.8px;line-height:22.8px;font-size:16.4px;letter-spacing:-0.6px;color:#6e7681">705</div>
<div class="t mono" style="left:711px;top:929.50px;height:22.8px;line-height:22.8px;font-size:16.4px;letter-spacing:-0.6px;color:#d4d4d4">                <span style="color:#da70d6;">}</span></div>
<div class="t mono" style="left:619px;width:60px;text-align:right;top:952.30px;height:22.8px;line-height:22.8px;font-size:16.4px;letter-spacing:-0.6px;color:#6e7681">706</div>
<div class="t mono" style="left:711px;top:952.30px;height:22.8px;line-height:22.8px;font-size:16.4px;letter-spacing:-0.6px;color:#d4d4d4">            <span style="color:#ffd700;">}</span></div>
<div class="t mono" style="left:619px;width:60px;text-align:right;top:975.10px;height:22.8px;line-height:22.8px;font-size:16.4px;letter-spacing:-0.6px;color:#6e7681">707</div>
<div class="t mono" style="left:711px;top:975.10px;height:22.8px;line-height:22.8px;font-size:16.4px;letter-spacing:-0.6px;color:#d4d4d4"></div>
<div class="t mono" style="left:770px;top:519.10px;height:22.8px;line-height:22.8px;font-size:16.4px;letter-spacing:-0.6px;color:#5a5a5a">You, 3 недели назад • Order save refactor, data mov, req seeds, spl s…</div>
<div class="a" style="left:857.84px;top:474.0px;width:11.24px;height:19.8px;background:transparent;border:1px solid #707070"></div>
<div class="a" style="left:783.92px;top:702.0px;width:11.24px;height:19.8px;background:transparent;border:1px solid #707070"></div>
<div class="a" style="left:904.0px;top:264.5px;width:1.6px;height:1.6px;background:#b0b0b0;border-radius:50%"></div>
<div class="a" style="left:908.5px;top:264.5px;width:1.6px;height:1.6px;background:#b0b0b0;border-radius:50%"></div>
<div class="a" style="left:913.0px;top:264.5px;width:1.6px;height:1.6px;background:#b0b0b0;border-radius:50%"></div>
<div class="a" style="left:1025.0px;top:515.5px;width:1.6px;height:1.6px;background:#b0b0b0;border-radius:50%"></div>
<div class="a" style="left:1029.5px;top:515.5px;width:1.6px;height:1.6px;background:#b0b0b0;border-radius:50%"></div>
<div class="a" style="left:1034.0px;top:515.5px;width:1.6px;height:1.6px;background:#b0b0b0;border-radius:50%"></div>
<div class="a" style="left:858.0px;top:834.5px;width:1.6px;height:1.6px;background:#b0b0b0;border-radius:50%"></div>
<div class="a" style="left:862.5px;top:834.5px;width:1.6px;height:1.6px;background:#b0b0b0;border-radius:50%"></div>
<div class="a" style="left:867.0px;top:834.5px;width:1.6px;height:1.6px;background:#b0b0b0;border-radius:50%"></div>
<div class="a" style="left:932.0px;top:857px;width:1.6px;height:1.6px;background:#b0b0b0;border-radius:50%"></div>
<div class="a" style="left:936.5px;top:857px;width:1.6px;height:1.6px;background:#b0b0b0;border-radius:50%"></div>
<div class="a" style="left:941.0px;top:857px;width:1.6px;height:1.6px;background:#b0b0b0;border-radius:50%"></div>
<div class="a" style="left:619px;top:110px;width:1941px;height:45px;background:#1f1f1f;box-shadow:0 2px 4px rgba(0,0,0,0.18)"></div>
<div class="t mono" style="left:619px;width:60px;text-align:right;top:111.10px;height:22.8px;line-height:22.8px;font-size:16.4px;letter-spacing:-0.6px;color:#6e7681">29</div>
<div class="t mono" style="left:711px;top:111.10px;height:22.8px;line-height:22.8px;font-size:16.4px;letter-spacing:-0.6px;color:#d4d4d4"><span style="color:#569cd6;">class</span> <span style="color:#4ec9b0;">OrderService</span></div>
<div class="t mono" style="left:619px;width:60px;text-align:right;top:133.9px;height:22.8px;line-height:22.8px;font-size:16.4px;letter-spacing:-0.6px;color:#6e7681">640</div>
<div class="t mono" style="left:711px;top:133.9px;height:22.8px;line-height:22.8px;font-size:16.4px;letter-spacing:-0.6px;color:#d4d4d4">    <span style="color:#569cd6">protected</span> <span style="color:#569cd6">function</span> <span style="color:#dcdcaa">upsertRequest</span><span style="color:#da70d6">(</span><span style="color:#4ec9b0">Order</span> <span style="color:#9cdcfe">$order</span><span style="color:#d4d4d4">,</span> <span style="color:#d4d4d4">?</span><span style="color:#4ec9b0">RequestModel</span> <span style="color:#9cdcfe">$model</span><span style="color:#d4d4d4">,</span> <span style="color:#569cd6">array</span> <span style="color:#9cdcfe">$request</span><span style="color:#d4d4d4">,</span> <span style="opacity:0.6"><span style="color:#569cd6">bool</span> <span style="color:#9cdcfe">$draft</span> <span style="color:#d4d4d4">=</span> <span style="color:#569cd6">false</span></span><span style="color:#da70d6">)</span>: <span style="color:#4ec9b0">RequestModel</span></div>
<div class="a" style="left:2543px;top:110px;width:1px;height:885px;background:#2b2b2b;"></div>
<div class="a" style="left:2544px;top:476px;width:16px;height:14px;background:#4a4a4a;"></div>
<div class="a" style="left:2545px;top:483px;width:15px;height:2px;background:#a0a0a0;"></div>
<div class="a" style="left:2554px;top:551px;width:6px;height:5px;background:#f14c2c;"></div>
<div class="a" style="left:2554px;top:615px;width:6px;height:17px;background:#f14c2c;"></div>
<div class="a" style="left:2554px;top:749px;width:6px;height:5px;background:#cca700;"></div>
<div class="a" style="left:2554px;top:780px;width:6px;height:5px;background:#3794ff;"></div>
<div class="a" style="left:2554px;top:901px;width:6px;height:11px;background:#3794ff;"></div>
<div class="a" style="left:619px;top:995px;width:1941px;height:379px;background:#181818;"></div>
<div class="a" style="left:619px;top:995px;width:1941px;height:1px;background:#2b2b2b;"></div>
<div class="t" style="left:643.3px;top:1009.90px;font-size:13.2px;height:13.2px;line-height:13.2px;color:#9d9d9d;font-weight:normal;font-family:'Liberation Sans', sans-serif;letter-spacing:-0.647px;">ПРОБЛЕМЫ</div>
<div class="t" style="left:771.3px;top:1009.90px;font-size:13.2px;height:13.2px;line-height:13.2px;color:#9d9d9d;font-weight:normal;font-family:'Liberation Sans', sans-serif;letter-spacing:-0.651px;">ВЫХОДНЫЕ ДАННЫЕ</div>
<div class="t" style="left:928.5px;top:1009.90px;font-size:13.2px;height:13.2px;line-height:13.2px;color:#9d9d9d;font-weight:normal;font-family:'Liberation Sans', sans-serif;letter-spacing:-0.204px;">КОНСОЛЬ ОТЛАДКИ</div>
<div class="t" style="left:1083.4px;top:1009.90px;font-size:13.2px;height:13.2px;line-height:13.2px;color:#9d9d9d;font-weight:normal;font-family:'Liberation Sans', sans-serif;letter-spacing:-0.694px;">РЕЗУЛЬТАТЫ ТЕСТА</div>
<div class="t" style="left:1230.5px;top:1009.90px;font-size:13.2px;height:13.2px;line-height:13.2px;color:#e7e7e7;font-weight:normal;font-family:'Liberation Sans', sans-serif;letter-spacing:-0.400px;">ТЕРМИНАЛ</div>
<div class="t" style="left:1329.3px;top:1009.90px;font-size:13.2px;height:13.2px;line-height:13.2px;color:#9d9d9d;font-weight:normal;font-family:'Liberation Sans', sans-serif;letter-spacing:-0.683px;">ПОРТЫ</div>
<div class="t" style="left:1401.9px;top:1009.90px;font-size:13.2px;height:13.2px;line-height:13.2px;color:#9d9d9d;font-weight:normal;font-family:'Liberation Sans', sans-serif;letter-spacing:-0.929px;">DBCODE</div>
<div class="a" style="left:719.5px;top:1006.5px;width:25px;height:19px;border-radius:10px;background:#0078d4;color:#fff;font:bold 12px Liberation Sans,sans-serif;line-height:19px;text-align:center">14</div>
<div class="a" style="left:1228px;top:1028px;width:75px;height:2px;background:#0078d4;"></div>
<svg style="left:2211px;top:1007px;" width="20" height="20" viewBox="0 0 20 20"><path d="M10 2 V18 M2 10 H18" stroke="#cccccc" stroke-width="1.6"/></svg>
<svg style="left:2235px;top:1013px;" width="11" height="7" viewBox="0 0 11 7"><path d="M1 1 L5.5 5.5 L10 1" stroke="#cccccc" stroke-width="1.2" fill="none"/></svg>
<svg style="left:2260px;top:1007px;" width="19" height="19" viewBox="0 0 19 19"><rect x="0.8" y="0.8" width="17" height="17" rx="3" stroke="#cccccc" stroke-width="1.5" fill="none"/><path d="M4 6 L8 9 L4 12 M9 13.5 H15" stroke="#cccccc" stroke-width="1.5" fill="none"/></svg>
<div class="t" style="left:2283.5px;top:1010.30px;font-size:14.4px;height:14.4px;line-height:14.4px;color:#e2b31c;font-weight:normal;font-family:'Liberation Sans', sans-serif;letter-spacing:-0.583px;">powershell</div>
<svg style="left:2352px;top:1006px;" width="18" height="18" viewBox="0 0 18 18"><path d="M9 1.5 L17 16.5 H1 Z" stroke="#e2b31c" stroke-width="1.5" fill="none" stroke-linejoin="round"/><path d="M9 6.5 V11.5" stroke="#e2b31c" stroke-width="1.5"/><circle cx="9" cy="13.8" r="0.9" fill="#e2b31c"/></svg>
<svg style="left:2382px;top:1007px;" width="19" height="19" viewBox="0 0 19 19"><rect x="0.8" y="0.8" width="17" height="17" rx="3" stroke="#cccccc" stroke-width="1.6" fill="none"/><path d="M9.3 1 V18" stroke="#cccccc" stroke-width="1.6"/></svg>
<svg style="left:2413px;top:1005px;" width="18" height="20" viewBox="0 0 18 20"><path d="M1 4 H17 M6 4 V2 H12 V4 M3 4 L4 19 H14 L15 4 M7 7 V16 M11 7 V16" stroke="#cccccc" stroke-width="1.6" fill="none"/></svg>
<div class="a" style="left:2447px;top:1015px;width:3px;height:3px;background:#cccccc;border-radius:50%"></div>
<div class="a" style="left:2453px;top:1015px;width:3px;height:3px;background:#cccccc;border-radius:50%"></div>
<div class="a" style="left:2459px;top:1015px;width:3px;height:3px;background:#cccccc;border-radius:50%"></div>
<div class="a" style="left:2475px;top:1006px;width:1px;height:20px;background:#5a5a5a;"></div>
<svg style="left:2493px;top:1009px;" width="16" height="16" viewBox="0 0 16 16"><path d="M1 5 V1 H5 M11 1 H15 V5 M15 11 V15 H11 M5 15 H1 V11" stroke="#cccccc" stroke-width="1.6" fill="none"/></svg>
<svg style="left:2526px;top:1010px;" width="13" height="13" viewBox="0 0 13 13"><path d="M1 1 L12 12 M12 1 L1 12" stroke="#cccccc" stroke-width="1.6"/></svg>
<div class="a" style="left:2541px;top:1038px;width:1px;height:336px;background:#2b2b2b;"></div>
<div class="a" style="left:2542px;top:1037px;width:18px;height:1px;background:#000000;"></div>
<div class="a" style="left:2544px;top:1038px;width:5px;height:5px;background:#1e90d4;"></div>
<div class="a" style="left:2544px;top:1060px;width:5px;height:7px;background:#1e90d4;"></div>
<div class="t mono" style="left:643px;top:1040px;height:21px;line-height:21px;font-size:16.0px;letter-spacing:-0.600px"><span style="color:#cccccc;font-weight:normal">  gzip:  76.82 kB</span></div>
<div class="a" style="left:647px;top:1038.5px;width:1px;height:20px;background:#cccccc;"></div>
<div class="a" style="left:1421px;top:1059px;width:1px;height:126px;background:#cccccc;"></div>
<svg style="left:627px;top:1043px;" width="11" height="11" viewBox="0 0 11 11"><circle cx="5.5" cy="5.5" r="3.8" stroke="#6b6b6b" stroke-width="2.2" fill="none"/></svg>
<div class="t mono" style="left:643px;top:1061px;height:21px;line-height:21px;font-size:16.0px;letter-spacing:-0.600px"><span style="color:#cccccc;font-weight:normal">public/build/</span><span style="color:#29b8db;font-weight:normal">assets/Universal-NWzHk_QK.js</span><span style="color:#e5e5e5;font-weight:bold">                                   421.79 kB</span><span style="color:#cccccc;font-weight:normal">   gzip: 119.90 kB</span></div>
<div class="t mono" style="left:643px;top:1082px;height:21px;line-height:21px;font-size:16.0px;letter-spacing:-0.600px"><span style="color:#cccccc;font-weight:normal">public/build/</span><span style="color:#29b8db;font-weight:normal">assets/antd-CDtB0ijx.js</span><span style="color:#e5e5e5;font-weight:bold">                                        509.38 kB</span><span style="color:#cccccc;font-weight:normal">   gzip: 168.39 kB</span></div>
<div class="t mono" style="left:643px;top:1103px;height:21px;line-height:21px;font-size:16.0px;letter-spacing:-0.600px"><span style="color:#cccccc;font-weight:normal">public/build/</span><span style="color:#29b8db;font-weight:normal">assets/app-DUy6DsOl.js</span><span style="color:#e5e5e5;font-weight:bold">                                         551.82 kB</span><span style="color:#cccccc;font-weight:normal">   gzip: 156.52 kB</span></div>
<div class="t mono" style="left:643px;top:1124px;height:21px;line-height:21px;font-size:16.0px;letter-spacing:-0.600px"><span style="color:#cccccc;font-weight:normal">public/build/</span><span style="color:#29b8db;font-weight:normal">assets/mathlive-BYNPSh-t.js</span><span style="color:#e5e5e5;font-weight:bold">                                    814.49 kB</span><span style="color:#cccccc;font-weight:normal">   gzip: 225.04 kB</span></div>
<div class="t mono" style="left:643px;top:1145px;height:21px;line-height:21px;font-size:16.0px;letter-spacing:-0.600px"><span style="color:#cccccc;font-weight:normal">public/build/</span><span style="color:#29b8db;font-weight:normal">assets/react-syntax-highlighter-8ddAPE_Y.js</span><span style="color:#e5e5e5;font-weight:bold">                    912.10 kB</span><span style="color:#cccccc;font-weight:normal">   gzip: 296.24 kB</span></div>
<div class="t mono" style="left:643px;top:1166px;height:21px;line-height:21px;font-size:16.0px;letter-spacing:-0.600px"><span style="color:#cccccc;font-weight:normal">public/build/</span><span style="color:#29b8db;font-weight:normal">assets/Index-CpTMsC6Y.js</span><span style="color:#e5e5e5;font-weight:bold">                                     1,215.92 kB</span><span style="color:#cccccc;font-weight:normal">   gzip: 328.81 kB</span></div>
<div class="t mono" style="left:643px;top:1187px;height:21px;line-height:21px;font-size:16.0px;letter-spacing:-0.600px"><span style="color:#23d18b;font-weight:normal">✓ built in 1m 31s</span></div>
<div class="t mono" style="left:643px;top:1208px;height:21px;line-height:21px;font-size:16.0px;letter-spacing:-0.600px"><span style="color:#cccccc;font-weight:normal">Build version: -Vf1MuZo49icqGk4pwyfb</span></div>
<div class="t mono" style="left:643px;top:1229px;height:21px;line-height:21px;font-size:16.0px;letter-spacing:-0.600px"><span style="color:#cccccc;font-weight:normal">PS C:\Users\Sergey\source\repos\alfa-lara&gt; </span></div>
<div class="a" style="left:1029px;top:1228px;width:10px;height:20px;background:transparent;border:1px solid #cccccc"></div>
<div class="a" style="left:0px;top:1374px;width:2560px;height:26px;background:#181818;"></div>
<div class="a" style="left:0px;top:1374px;width:2560px;height:1px;background:#2b2b2b;"></div>
<svg style="left:12px;top:1376px;" width="20" height="22" viewBox="0 0 20 22"><path d="M3 7.5 L8.5 13 L3 18.5" stroke="#cccccc" stroke-width="1.5" fill="none"/><path d="M15.5 3.5 L10.5 8.5 L15.5 13.5" stroke="#cccccc" stroke-width="1.5" fill="none"/></svg>
<svg style="left:52px;top:1378px;" width="18" height="18" viewBox="0 0 18 18"><circle cx="4" cy="3.5" r="2.5" stroke="#cccccc" stroke-width="1.4" fill="none"/><circle cx="4" cy="15" r="2.5" stroke="#cccccc" stroke-width="1.4" fill="none"/><path d="M4 6 V12.5 M4 10 Q4 8 9 8" stroke="#cccccc" stroke-width="1.4" fill="none"/><circle cx="12.5" cy="13" r="4" fill="#cccccc"/><path d="M12.5 10.5 V15.5 M10.3 11.8 L14.7 14.2 M14.7 11.8 L10.3 14.2" stroke="#181818" stroke-width="1"/></svg>
<div class="t" style="left:73.75px;top:1381.30px;font-size:14.4px;height:14.4px;line-height:14.4px;color:#cccccc;font-weight:normal;font-family:'Liberation Sans', sans-serif;letter-spacing:0.108px;">dynamic-fields*</div>
<svg style="left:180px;top:1378px;" width="18" height="18" viewBox="0 0 18 18"><path d="M15 8 A6.5 6.5 0 0 0 3.5 5 M3 10 A6.5 6.5 0 0 0 14.5 13" stroke="#cccccc" stroke-width="1.5" fill="none"/><path d="M3 1.5 V5.5 H7 M15 16.5 V12.5 H11" stroke="#cccccc" stroke-width="1.5" fill="none"/></svg>
<svg style="left:218px;top:1378px;" width="18" height="18" viewBox="0 0 18 18"><circle cx="5" cy="3.5" r="2.2" stroke="#cccccc" stroke-width="1.3" fill="none"/><circle cx="5" cy="15" r="2.2" stroke="#cccccc" stroke-width="1.3" fill="none"/><circle cx="13" cy="9" r="2.6" stroke="#cccccc" stroke-width="1.3" fill="none"/><path d="M5 5.7 V12.8 M8.5 1 V17 M5 9 H10.5" stroke="#cccccc" stroke-width="1.3" fill="none"/></svg>
<svg style="left:257px;top:1379px;" width="18" height="17" viewBox="0 0 18 17"><path d="M1 1.5 H12 V9 H6 L3 12 V9 H1 Z" stroke="#cccccc" stroke-width="1.4" fill="none" stroke-linejoin="round"/><path d="M12 5 H17 V12.5 H15 V15.5 L12 12.5 H7 V9.5" stroke="#cccccc" stroke-width="1.4" fill="none" stroke-linejoin="round"/></svg>
<div class="t" style="left:279.5px;top:1381.30px;font-size:14.4px;height:14.4px;line-height:14.4px;color:#cccccc;font-weight:normal;font-family:'Liberation Sans', sans-serif;letter-spacing:-0.091px;">Qwen</div>
<svg style="left:336px;top:1379px;" width="18" height="18" viewBox="0 0 18 18"><circle cx="8.5" cy="8.5" r="7.5" stroke="#cccccc" stroke-width="1.4" fill="none"/><path d="M5.5 5.5 L11.5 11.5 M11.5 5.5 L5.5 11.5" stroke="#cccccc" stroke-width="1.4"/></svg>
<div class="t" style="left:357px;top:1381.30px;font-size:14.4px;height:14.4px;line-height:14.4px;color:#cccccc;font-weight:normal;font-family:'Liberation Sans', sans-serif;">4</div>
<svg style="left:371px;top:1379px;" width="18" height="17" viewBox="0 0 18 17"><path d="M8.5 1.5 L16.5 15.5 H0.5 Z" stroke="#cccccc" stroke-width="1.4" fill="none" stroke-linejoin="round"/><path d="M8.5 6 V11" stroke="#cccccc" stroke-width="1.4"/><circle cx="8.5" cy="13" r="0.9" fill="#cccccc"/></svg>
<div class="t" style="left:392px;top:1381.30px;font-size:14.4px;height:14.4px;line-height:14.4px;color:#cccccc;font-weight:normal;font-family:'Liberation Sans', sans-serif;">5</div>
<svg style="left:406px;top:1379px;" width="18" height="18" viewBox="0 0 18 18"><circle cx="8.5" cy="8.5" r="7.5" stroke="#cccccc" stroke-width="1.4" fill="none"/><path d="M8.5 7 V13" stroke="#cccccc" stroke-width="1.6"/><circle cx="8.5" cy="4.5" r="1" fill="#cccccc"/></svg>
<div class="t" style="left:428px;top:1381.30px;font-size:14.4px;height:14.4px;line-height:14.4px;color:#cccccc;font-weight:normal;font-family:'Liberation Sans', sans-serif;">5</div>
<svg style="left:458px;top:1378px;" width="14" height="18" viewBox="0 0 14 18"><ellipse cx="7" cy="3.5" rx="5.5" ry="2.5" stroke="#cccccc" stroke-width="1.4" fill="none"/><path d="M1.5 3.5 V14 Q1.5 16.5 7 16.5 Q12.5 16.5 12.5 14 V3.5" stroke="#cccccc" stroke-width="1.4" fill="none"/></svg>
<div class="t" style="left:478.25px;top:1381.30px;font-size:14.4px;height:14.4px;line-height:14.4px;color:#cccccc;font-weight:normal;font-family:'Liberation Sans', sans-serif;letter-spacing:-0.054px;">Connect</div>
<svg style="left:550px;top:1378px;" width="20" height="20" viewBox="0 0 20 20"><circle cx="10" cy="10" r="9.5" fill="#cccccc"/><path d="M4 7 Q10 2 16 6 Q12 6 10 8 Q8 11 11 12 Q14 13 18 10 Q15 17 9 16 Q3 14 4 7Z" fill="#181818"/></svg>
<div class="t" style="left:574.25px;top:1381.30px;font-size:14.4px;height:14.4px;line-height:14.4px;color:#cccccc;font-weight:normal;font-family:'Liberation Sans', sans-serif;letter-spacing:0.027px;">Готов</div>
<svg style="left:1666px;top:1379px;" width="12" height="18" viewBox="0 0 12 18"><circle cx="6" cy="8.5" r="3.3" stroke="#cccccc" stroke-width="1.4" fill="none"/><path d="M6 1 V5.2 M6 11.8 V17" stroke="#cccccc" stroke-width="1.4"/></svg>
<div class="t" style="left:1686px;top:1381.30px;font-size:14.4px;height:14.4px;line-height:14.4px;color:#cccccc;font-weight:normal;font-family:'Liberation Sans', sans-serif;letter-spacing:-0.181px;">You, 3 недели назад</div>
<svg style="left:1839px;top:1379px;" width="12" height="18" viewBox="0 0 12 18"><circle cx="6" cy="8.5" r="3.3" stroke="#cccccc" stroke-width="1.4" fill="none"/><path d="M6 1 V5.2 M6 11.8 V17" stroke="#cccccc" stroke-width="1.4"/></svg>
<div class="t" style="left:1858.7px;top:1381.30px;font-size:14.4px;height:14.4px;line-height:14.4px;color:#cccccc;font-weight:normal;font-family:'Liberation Sans', sans-serif;letter-spacing:-0.272px;">sShemet (3 нед. назад)</div>
<div class="t" style="left:2024.5px;top:1381.30px;font-size:14.4px;height:14.4px;line-height:14.4px;color:#cccccc;font-weight:normal;font-family:'Liberation Sans', sans-serif;letter-spacing:-0.202px;">Строка 687, столбец 1</div>
<div class="t" style="left:2189.4px;top:1381.30px;font-size:14.4px;height:14.4px;line-height:14.4px;color:#cccccc;font-weight:normal;font-family:'Liberation Sans', sans-serif;letter-spacing:-0.056px;">Пробелов: 4</div>
<div class="t" style="left:2290px;top:1381.30px;font-size:14.4px;height:14.4px;line-height:14.4px;color:#cccccc;font-weight:normal;font-family:'Liberation Sans', sans-serif;letter-spacing:-0.478px;">UTF-8</div>
<div class="t" style="left:2347px;top:1381.30px;font-size:14.4px;height:14.4px;line-height:14.4px;color:#cccccc;font-weight:normal;font-family:'Liberation Sans', sans-serif;">LF</div>
<svg style="left:2383px;top:1378px;" width="20" height="18" viewBox="0 0 20 18"><path d="M5 1.5 Q2.5 1.5 2.5 4 V7 Q2.5 8.5 1 8.5 Q2.5 8.5 2.5 10 V13 Q2.5 15.5 5 15.5" stroke="#cccccc" stroke-width="1.4" fill="none"/><circle cx="13" cy="14" r="3.4" fill="#cccccc"/><path d="M11.5 12.5 L14.5 15.5 M14.5 12.5 L11.5 15.5" stroke="#181818" stroke-width="1"/><path d="M10 1.5 Q12.5 1.5 12.5 4 V8" stroke="#cccccc" stroke-width="1.4" fill="none"/></svg>
<div class="t" style="left:2406px;top:1381.30px;font-size:14.4px;height:14.4px;line-height:14.4px;color:#cccccc;font-weight:normal;font-family:'Liberation Sans', sans-serif;letter-spacing:-0.737px;">PHP</div>
<div class="t" style="left:2452px;top:1381.30px;font-size:14.4px;height:14.4px;line-height:14.4px;color:#cccccc;font-weight:normal;font-family:'Liberation Sans', sans-serif;">8.5</div>
<svg style="left:2490px;top:1378px;" width="18" height="18" viewBox="0 0 18 18"><circle cx="12" cy="6" r="4.5" stroke="#cccccc" stroke-width="1.5" fill="none"/><path d="M9 9 L1.5 16.5 M3.5 14.5 L6 17 M5.5 12.5 L7.5 14.5" stroke="#cccccc" stroke-width="1.5" fill="none"/></svg>
<svg style="left:2528px;top:1378px;" width="18" height="19" viewBox="0 0 18 19"><path d="M9 1.5 Q3.5 1.5 3.5 7.5 V12 L1.5 15 H16.5 L14.5 12 V7.5 Q14.5 1.5 9 1.5 Z M7 16.5 Q9 18.5 11 16.5" stroke="#cccccc" stroke-width="1.4" fill="none" stroke-linejoin="round"/></svg>
<div class="a" style="left:0px;top:1400px;width:2560px;height:40px;background:#1c1c1c;"></div>
<svg style="left:15px;top:1411px;" width="19" height="19" viewBox="0 0 19 19"><rect x="0" y="0" width="8.8" height="8.8" fill="#ffffff"/><rect x="10" y="0" width="8.8" height="8.8" fill="#ffffff"/><rect x="0" y="10" width="8.8" height="8.8" fill="#ffffff"/><rect x="10" y="10" width="8.8" height="8.8" fill="#ffffff"/></svg>
<div class="a" style="left:64px;top:1409px;width:22px;height:22px;background:#2a2a2a;border-radius:2px"></div>
<div class="t" style="left:66px;top:1415.25px;font-size:10.5px;height:10.5px;line-height:10.5px;color:#e0e0e0;font-weight:normal;font-family:'Liberation Sans', sans-serif;">Live</div>
<svg style="left:111px;top:1408px;" width="26" height="26" viewBox="0 0 26 26"><rect x="0" y="0" width="24" height="24" rx="2" fill="#f26322"/><g fill="#fff"><rect x="5" y="10" width="2" height="2"/><rect x="8" y="8" width="2" height="2"/><rect x="11" y="10" width="2" height="2"/><rect x="14" y="8" width="2" height="2"/><rect x="17" y="10" width="2" height="2"/><rect x="8" y="13" width="2" height="2"/><rect x="14" y="13" width="2" height="2"/></g></svg>
<svg style="left:160px;top:1408px;" width="26" height="26" viewBox="0 0 26 26"><rect x="1" y="1" width="24" height="18" fill="#2d3c4d" stroke="#c0c0c0"/><path d="M3 4 L6 6 L3 8" stroke="#fff" fill="none"/><path d="M10 14 L16 20 L22 14 L16 8 Z" fill="#e23a3a"/><path d="M14 18 L20 24 L26 18 L20 12 Z" fill="#7ac943"/><path d="M12 12 L18 6 L22 10 L16 16 Z" fill="#3b8fd9"/></svg>
<svg style="left:209px;top:1408px;" width="26" height="26" viewBox="0 0 26 26"><rect x="0" y="0" width="24" height="24" fill="#e95420"/><circle cx="12" cy="12" r="6.5" stroke="#fff" stroke-width="2.4" fill="none"/><circle cx="5.5" cy="12" r="2.5" fill="#fff"/><circle cx="15.5" cy="6.5" r="2.5" fill="#fff"/><circle cx="15.5" cy="17.5" r="2.5" fill="#fff"/></svg>
<svg style="left:258px;top:1408px;" width="26" height="26" viewBox="0 0 26 26"><rect x="0" y="0" width="24" height="24" rx="3" fill="#000"/><path d="M12 2 L13.5 9 L20 4 L15 10.5 L22 12 L15 13.5 L20 20 L13.5 15 L12 22 L10.5 15 L4 20 L9 13.5 L2 12 L9 10.5 L4 4 L10.5 9Z" fill="#ffd400"/></svg>
<svg style="left:307px;top:1408px;" width="26" height="26" viewBox="0 0 26 26"><circle cx="12" cy="13" r="11" fill="#ff7139"/><circle cx="12" cy="13" r="6.5" fill="#7542e5"/><path d="M4 6 Q9 0 16 2 Q13 4 14 6 Q8 5 6 10Z" fill="#ffbd2e"/></svg>
<svg style="left:356px;top:1408px;" width="26" height="26" viewBox="0 0 26 26"><rect x="1" y="2" width="8" height="21" fill="none" stroke="#2f6bd8" stroke-width="3"/><path d="M13 3 H22 M18 3 V23" stroke="#2f6bd8" stroke-width="3.5"/></svg>
<svg style="left:405px;top:1408px;" width="26" height="26" viewBox="0 0 26 26"><path d="M12 0.5 L22.5 6.5 V18.5 L12 24.5 L1.5 18.5 V6.5 Z" fill="#1f6fe0"/><path d="M12 3 L20 7.5 V17 L12 21.5 L4 17 V7.5 Z" fill="#29a3f3"/><path d="M8 6.5 V18 M16 6.5 V18 M8 12 H16" stroke="#fff" stroke-width="2.8"/></svg>
<svg style="left:454px;top:1408px;" width="26" height="26" viewBox="0 0 26 26"><circle cx="12" cy="12" r="11.5" fill="#db4437"/><path d="M12 12 L2 6 A11.5 11.5 0 0 0 7 22.5 Z" fill="#0f9d58"/><path d="M12 12 L7 22.5 A11.5 11.5 0 0 0 23.5 11 Z" fill="#ffcd40"/><circle cx="12" cy="12" r="5.5" fill="#fff"/><circle cx="12" cy="12" r="4.2" fill="#4285f4"/></svg>
<svg style="left:503px;top:1408px;" width="26" height="26" viewBox="0 0 26 26"><path d="M1 4 H9 L11 6 H23 V21 H1 Z" fill="#e8b730"/><rect x="1" y="9" width="22" height="12" fill="#f6d365"/><rect x="7" y="15" width="10" height="6" fill="#3d8ee0"/></svg>
<svg style="left:552px;top:1408px;" width="26" height="26" viewBox="0 0 26 26"><path d="M12 1 L19 8 L17 20 L12 23 L7 20 L5 8 Z" fill="#8e5cf7"/><path d="M12 1 L14 12 L12 23 L7 20 L5 8Z" fill="#a98bf9"/></svg>
<div class="a" style="left:590px;top:1400px;width:48px;height:40px;background:#3a3a3a;"></div>
<svg style="left:601px;top:1408px;" width="26" height="26" viewBox="0 0 26 26"><path d="M17.5 1 L23 3.6 V20.4 L17.5 23 L6 13 L2 16 L0.5 15.2 V8.8 L2 8 L6 11 Z" fill="#0f7fd0"/><path d="M17.5 6.5 V17.5 L10.5 12 Z" fill="#3a3a3a"/><path d="M17.5 1 L23 3.6 V20.4 L17.5 23 Z" fill="#1f9cf0"/></svg>
<div class="a" style="left:638px;top:1400px;width:48px;height:40px;background:#a0622e;"></div>
<div class="a" style="left:638px;top:1438px;width:48px;height:2px;background:#ff8c1a;"></div>
<svg style="left:650px;top:1408px;" width="26" height="26" viewBox="0 0 26 26"><circle cx="12" cy="12" r="11" fill="#2aa3de"/><path d="M5 12 L18 7 L16 18 L11 14 Z" fill="#fff"/><rect x="12" y="13" width="14" height="10" rx="1" fill="#e53935"/><text x="13" y="21.5" font-size="8" font-family="Liberation Sans" fill="#fff">..55</text></svg>
<svg style="left:699px;top:1408px;" width="26" height="26" viewBox="0 0 26 26"><rect x="4" y="3" width="18" height="13" fill="#cfd8dc" stroke="#8a9aa4"/><rect x="7" y="5" width="12" height="9" fill="#1e3fc8"/><path d="M2 16 H24 L22 23 H4 Z" fill="#b0bec5"/></svg>
<svg style="left:748px;top:1408px;" width="26" height="26" viewBox="0 0 26 26"><rect x="0" y="1" width="24" height="11" fill="#e53935"/><text x="2" y="10" font-size="8" font-family="Liberation Sans" font-weight="bold" fill="#fff">VOICE</text><rect x="0" y="13" width="24" height="10" fill="#263238"/><text x="1" y="21" font-size="7" font-family="Liberation Sans" font-weight="bold" fill="#cfd8dc">MEETER</text></svg>
<svg style="left:797px;top:1408px;" width="26" height="26" viewBox="0 0 26 26"><rect x="2" y="1" width="20" height="23" fill="#f0f4c3" stroke="#9e9d24"/><rect x="2" y="5" width="20" height="19" fill="#7cb342"/><path d="M6 10 V18 M9 12 H14" stroke="#fff" stroke-width="1.6"/><path d="M22 1 L14 18" stroke="#e65100" stroke-width="2.4"/></svg>
<svg style="left:846px;top:1408px;" width="26" height="26" viewBox="0 0 26 26"><circle cx="14" cy="14" r="7" fill="#ea7600"/><circle cx="14" cy="14" r="4.5" fill="#fff"/><circle cx="14" cy="14" r="2.6" fill="#265787"/><path d="M1 13 L10 7 M3 18 L9 14" stroke="#ea7600" stroke-width="2.6"/></svg>
<svg style="left:895px;top:1408px;" width="26" height="26" viewBox="0 0 26 26"><circle cx="12" cy="12" r="12" fill="#1b6ea8"/><circle cx="12" cy="12" r="10" fill="#2d9ad8"/><path d="M6 8 L11 18 L18 5" stroke="#fff" stroke-width="3" fill="none"/></svg>
<svg style="left:944px;top:1408px;" width="26" height="26" viewBox="0 0 26 26"><rect x="0" y="1" width="24" height="23" fill="#111"/><rect x="2" y="3" width="20" height="19" fill="#555"/><text x="5" y="20" font-size="18" font-family="Liberation Serif" font-weight="bold" fill="#fff">P</text></svg>
<svg style="left:993px;top:1408px;" width="26" height="26" viewBox="0 0 26 26"><circle cx="12" cy="12" r="12" fill="#6e40c9"/><circle cx="12" cy="12" r="8" fill="#fff"/><path d="M7 8 L8.5 6 L10 7.5 H14 L15.5 6 L17 8 V12 Q17 16 13 16 V19 H11 V16 Q7 16 7 12Z" fill="#6e40c9"/></svg>
<svg style="left:1042px;top:1408px;" width="26" height="26" viewBox="0 0 26 26"><rect x="1" y="6" width="24" height="17" rx="1" fill="#f5a623"/><rect x="1" y="3" width="10" height="5" fill="#f5a623"/><path d="M6 10 L22 24" stroke="#333" stroke-width="1.6"/><path d="M6 8 L7 11 L10 11 L7.5 13 L8.5 16 L6 14 L3.5 16 L4.5 13 L2 11 L5 11Z" fill="#fff"/></svg>
<div class="a" style="left:153px;top:1438px;width:40px;height:2px;background:#8a9aa8;"></div>
<div class="a" style="left:300px;top:1438px;width:40px;height:2px;background:#8a9aa8;"></div>
<div class="a" style="left:447px;top:1438px;width:40px;height:2px;background:#8a9aa8;"></div>
<div class="a" style="left:496px;top:1438px;width:40px;height:2px;background:#8a9aa8;"></div>
<div class="a" style="left:692px;top:1438px;width:40px;height:2px;background:#8a9aa8;"></div>
<div class="a" style="left:741px;top:1438px;width:40px;height:2px;background:#8a9aa8;"></div>
<div class="a" style="left:790px;top:1438px;width:40px;height:2px;background:#8a9aa8;"></div>
<div class="a" style="left:839px;top:1438px;width:40px;height:2px;background:#8a9aa8;"></div>
<div class="a" style="left:888px;top:1438px;width:40px;height:2px;background:#8a9aa8;"></div>
<div class="a" style="left:937px;top:1438px;width:40px;height:2px;background:#8a9aa8;"></div>
<div class="a" style="left:986px;top:1438px;width:40px;height:2px;background:#8a9aa8;"></div>
<div class="a" style="left:1035px;top:1438px;width:40px;height:2px;background:#8a9aa8;"></div>
<div class="a" style="left:590px;top:1438px;width:48px;height:2px;background:#8a9aa8;"></div>
<svg style="left:2096px;top:1410px;" width="18" height="18" viewBox="0 0 18 18"><circle cx="9" cy="9" r="8.5" fill="#1b6ea8"/><path d="M4.5 6 L8 13 L13.5 4" stroke="#fff" stroke-width="2.2" fill="none"/></svg>
<svg style="left:2121px;top:1410px;" width="16" height="18" viewBox="0 0 16 18"><path d="M2 3 L5 1 L7 4 H9 L11 1 L14 3 V16 H2 Z" fill="#eee"/><circle cx="8" cy="9" r="2" fill="#555"/></svg>
<svg style="left:2145px;top:1410px;" width="16" height="17" viewBox="0 0 16 17"><path d="M1 1 H7 V7 L4 4 L1 7 Z M9 1 H15 V7 L12 4 L9 7 Z M1 9 L4 12 L7 9 V16 H1 Z M9 9 L12 12 L15 9 V16 H9 Z" fill="#fff"/></svg>
<svg style="left:2168px;top:1409px;" width="18" height="18" viewBox="0 0 18 18"><rect x="0" y="0" width="18" height="18" rx="3" fill="#fff"/><path d="M3 13 L7 6 L9 9.5 L6 15 Z" fill="#0f9d58"/><path d="M7 5 H11 L15 12 H11 Z" fill="#ffcd40"/><path d="M6 15 L8 12 H15.5 L13.5 15 Z" fill="#4285f4"/></svg>
<svg style="left:2192px;top:1411px;" width="16" height="16" viewBox="0 0 16 16"><path d="M2 14 L8 3 L14 6 L10 13 Z" fill="#1b5fa8"/><path d="M4 15 L14 9" stroke="#7ab8f5" stroke-width="1.5"/></svg>
<svg style="left:2216px;top:1412px;" width="18" height="14" viewBox="0 0 18 14"><path d="M1 7 Q9 -2 17 7 Q9 16 1 7Z" fill="#76b900"/><circle cx="9" cy="7" r="2.5" fill="#1c1c1c"/></svg>
<svg style="left:2240px;top:1411px;" width="17" height="17" viewBox="0 0 17 17"><circle cx="8.5" cy="8.5" r="6.5" stroke="#a55eea" stroke-width="2" fill="none" stroke-dasharray="8 3"/></svg>
<svg style="left:2265px;top:1409px;" width="14" height="20" viewBox="0 0 14 20"><rect x="4" y="1" width="6" height="11" rx="3" fill="#f0f0f0"/><path d="M1.5 8 Q1.5 14 7 14 Q12.5 14 12.5 8 M7 14 V18 M4 18 H10" stroke="#f0f0f0" stroke-width="1.5" fill="none"/></svg>
<svg style="left:2286px;top:1409px;" width="20" height="20" viewBox="0 0 20 20"><path d="M8 1 L15 3.5 V9 Q15 15 8 18 Q1 15 1 9 V3.5 Z" fill="#f0f0f0"/><path d="M8 1 V18 M1 8 H15" stroke="#c62828" stroke-width="2"/><circle cx="14.5" cy="14.5" r="4.5" fill="#e53935"/><path d="M12.5 12.5 L16.5 16.5 M16.5 12.5 L12.5 16.5" stroke="#fff" stroke-width="1.3"/></svg>
<svg style="left:2311px;top:1413px;" width="18" height="12" viewBox="0 0 18 12"><path d="M1 6 L5 2 L9 6 L13 2 L17 6 L13 10 L9 6 L5 10 Z" stroke="#777" stroke-width="1" fill="none"/></svg>
<svg style="left:2335px;top:1410px;" width="19" height="19" viewBox="0 0 19 19"><circle cx="9.5" cy="9.5" r="9.5" fill="#1e88e5"/><rect x="6" y="6" width="11" height="9" rx="1" fill="#e53935"/><text x="8" y="14" font-size="8" font-family="Liberation Sans" fill="#fff">5</text></svg>
<svg style="left:2361px;top:1409px;" width="14" height="20" viewBox="0 0 14 20"><path d="M3 1 H11 V19 H3 Z" stroke="#e0e0e0" stroke-width="1.4" fill="none"/><path d="M5 4 H9 M5 6 H9" stroke="#e0e0e0"/></svg>
<svg style="left:2384px;top:1410px;" width="19" height="18" viewBox="0 0 19 18"><circle cx="9.5" cy="9" r="8.5" fill="#5c8fd6"/><path d="M1 9 Q9.5 2 18 9 Z" fill="#f4b860"/></svg>
<svg style="left:2410px;top:1409px;" width="20" height="20" viewBox="0 0 20 20"><path d="M11 15 A3 3 0 0 1 14 12 M8 15 A6 6 0 0 1 14 9 M5 15 A9 9 0 0 1 14 6 M2 15 A12 12 0 0 1 14 3" stroke="#d0d0d0" stroke-width="1.4" fill="none"/><circle cx="13.5" cy="14.5" r="1.4" fill="#d0d0d0"/></svg>
<div class="a" style="left:2430px;top:1401px;width:22px;height:39px;background:#262626;"></div>
<svg style="left:2430px;top:1411px;" width="22" height="16" viewBox="0 0 22 16"><path d="M1 5.5 H4.5 L9 1.5 V14.5 L4.5 10.5 H1 Z" stroke="#d0d0d0" stroke-width="1.4" fill="none" stroke-linejoin="round"/><path d="M12 5 Q14 8 12 11 M15 3 Q18.5 8 15 13 M18 1 Q23 8 18 15" stroke="#d0d0d0" stroke-width="1.4" fill="none"/></svg>
<div class="t" style="left:2458.6px;top:1413.40px;font-size:13.2px;height:13.2px;line-height:13.2px;color:#e0e0e0;font-weight:normal;font-family:'Liberation Sans', sans-serif;letter-spacing:-1.068px;">ENG</div>
<div class="t" style="left:2507.4px;top:1404.00px;font-size:13.2px;height:13.2px;line-height:13.2px;color:#e0e0e0;font-weight:normal;font-family:'Liberation Sans', sans-serif;letter-spacing:-0.926px;">22:16</div>
<div class="t" style="left:2495.4px;top:1422.00px;font-size:13.2px;height:13.2px;line-height:13.2px;color:#e0e0e0;font-weight:normal;font-family:'Liberation Sans', sans-serif;letter-spacing:-1.186px;">16.03.2026</div>
<div class="a" style="left:2553px;top:1400px;width:1px;height:40px;background:#5a5a5a;"></div></body></html>
